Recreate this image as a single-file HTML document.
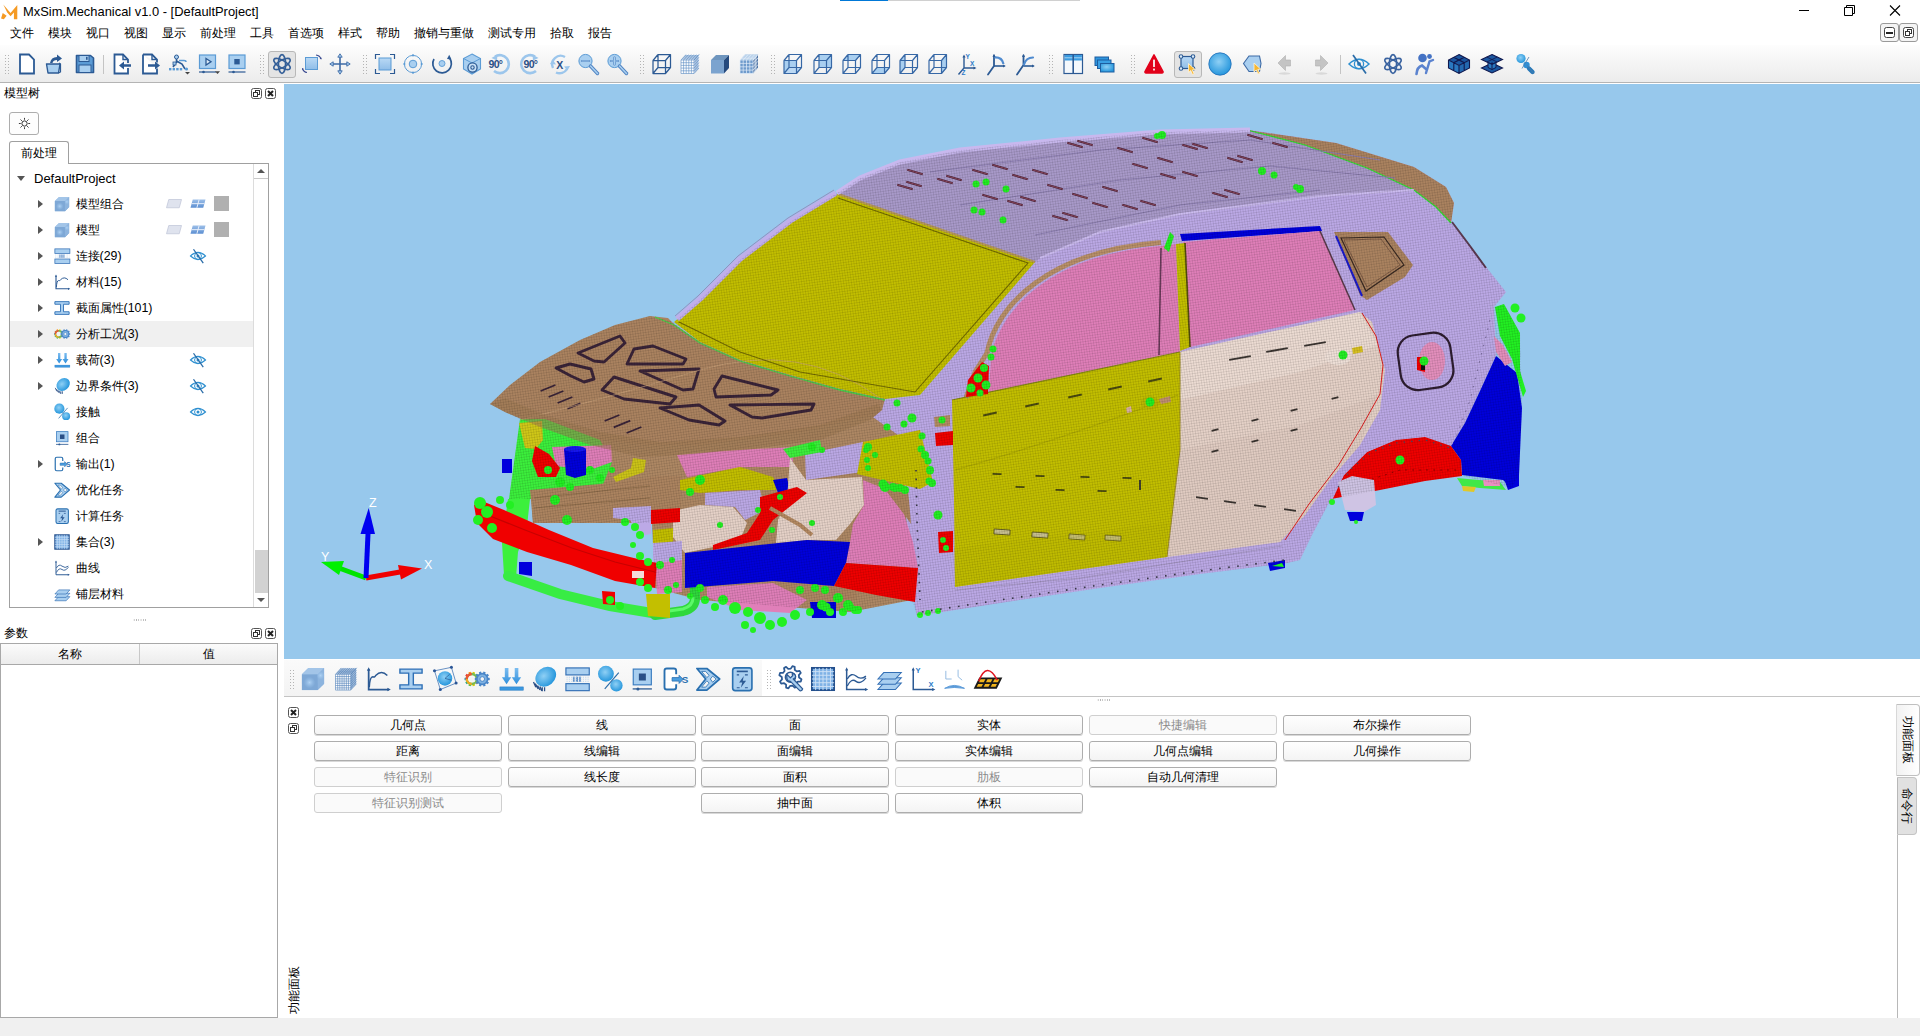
<!DOCTYPE html><html lang="zh"><head><meta charset="utf-8"><title>MxSim.Mechanical v1.0 - [DefaultProject]</title><style>
*{box-sizing:border-box;margin:0;padding:0}
html,body{width:1920px;height:1036px;overflow:hidden;background:#fff}
body{font-family:"Liberation Sans",sans-serif;font-size:12px;color:#000;position:relative}
.abs{position:absolute}
#title{left:23px;top:3px;height:18px;line-height:18px;font-size:12.9px;white-space:nowrap}
#menubar{left:0;top:23px;height:22px;width:1920px}
#menubar span{position:absolute;top:0;height:22px;line-height:21px;font-size:12px;white-space:nowrap}
#tb{left:0;top:45px;width:1920px;height:38px;background:linear-gradient(#fdfdfd,#f6f6f6 40%,#ececec);border-bottom:1px solid #b4b4b4}
.ic{position:absolute;width:24px;height:24px}
.ic svg{display:block;width:24px;height:24px;overflow:visible}
.hd{position:absolute;width:6px;height:21px;background-image:radial-gradient(circle,#b4b4b4 0.7px,transparent 1px);background-size:3px 3px}
.sep{position:absolute;width:1px;height:19px;background:#c4c4c4}
.sel{position:absolute;background:#e4e4e4;border:1px solid #b8b8b8;border-radius:3px}
.docktitle{position:absolute;font-size:12px;line-height:14px;white-space:nowrap}
.dbtn{position:absolute;width:11px;height:11px;border:1px solid #555;border-radius:2.5px;background:#fff}
.dbtn svg{position:absolute;left:0;top:0;width:9px;height:9px}
#treepane{left:9px;top:163px;width:260px;height:445px;border:1px solid #a0a0a0;background:#fff}
.row{position:absolute;left:0px;width:243px;height:26px}
.row .t{position:absolute;top:0;line-height:26px;font-size:12.4px;white-space:nowrap}
.arr{position:absolute;width:0;height:0}
.arr.r{border-left:5px solid #555;border-top:4px solid transparent;border-bottom:4px solid transparent}
.arr.d{border-top:5px solid #555;border-left:4px solid transparent;border-right:4px solid transparent}
.ti{position:absolute;width:18px;height:18px}
.ti svg{display:block;width:18px;height:18px;overflow:visible}
.btn{position:absolute;height:20px;width:188px;border:1px solid #adadad;border-radius:3px;background:linear-gradient(#fefefe,#f4f4f4);text-align:center;line-height:18px;font-size:12px;white-space:nowrap;box-shadow:0 1px 0 #d8d8d8}
.btn.dis{color:#8a8a8a;border-color:#cfcfcf;background:#fafafa;box-shadow:none}
.vtab{position:absolute;writing-mode:vertical-rl;font-size:12px;white-space:nowrap;text-align:center}
</style></head><body><svg width="0" height="0" style="position:absolute;left:0;top:0"><defs><linearGradient id="gL" x1="0" y1="0" x2="0" y2="1"><stop offset="0" stop-color="#b9d9f5"/><stop offset="1" stop-color="#8fbde8"/></linearGradient><radialGradient id="gS" cx=".45" cy=".4" r=".6"><stop offset="0" stop-color="#8fd0f5"/><stop offset="1" stop-color="#2596dc"/></radialGradient><linearGradient id="gC" x1="0" y1="0" x2="1" y2="1"><stop offset="0" stop-color="#9cc0e6"/><stop offset="1" stop-color="#6f9cd0"/></linearGradient><radialGradient id="gH"><stop offset="0" stop-color="#b4d6f6" stop-opacity=".9"/><stop offset="1" stop-color="#9cc6ee" stop-opacity="0"/></radialGradient><linearGradient id="gG" x1="0" y1="0" x2="0" y2="1"><stop offset="0" stop-color="#9dbfe8"/><stop offset="1" stop-color="#5c8fd2"/></linearGradient><linearGradient id="gA" x1="0" y1="0" x2="0" y2="1"><stop offset="0" stop-color="#7cbdf0"/><stop offset="1" stop-color="#2f8fdc"/></linearGradient></defs></svg><div class="abs" style="left:840px;top:0;width:48px;height:1px;background:#0078d7"></div><div class="abs" style="left:888px;top:0;width:192px;height:1px;background:#d0d0d0"></div><svg class="abs" style="left:1px;top:4px;width:18px;height:15.700px" viewBox="0 0 16 14"><path d="M0 13L1.5 8L5 10.5L2.5 13.5ZM2 0.5L8.5 8L14.5 1V13.5H11.5V7.5L8.5 11L5.500 7.500L4 4.500Z" fill="#f59a23"/></svg><div id="title" class="abs">MxSim.Mechanical v1.0 - [DefaultProject]</div><svg class="abs" style="left:1790px;top:0;width:130px;height:22px" viewBox="0 0 130 22"><path d="M9 10.500H19" stroke="#000" stroke-width="1"/><path d="M54.500 7.500H62.500V15.500H54.500ZM56.500 7.500V5.500H64.500V13.500H62.500" fill="none" stroke="#000" stroke-width="1"/><path d="M100 5.500L110 15.500M110 5.500L100 15.500" stroke="#000" stroke-width="1.100"/></svg><div id="menubar" class="abs"><span style="left:10px">文件</span><span style="left:48px">模块</span><span style="left:86px">视口</span><span style="left:124px">视图</span><span style="left:162px">显示</span><span style="left:200px">前处理</span><span style="left:250px">工具</span><span style="left:288px">首选项</span><span style="left:338px">样式</span><span style="left:376px">帮助</span><span style="left:414px">撤销与重做</span><span style="left:488px">测试专用</span><span style="left:550px">拾取</span><span style="left:588px">报告</span></div><div class="abs" style="left:1880px;top:23px;width:19px;height:19px;border:1px solid #9a9a9a;border-radius:3px;background:#f4f4f4"><div class="abs" style="left:3px;top:3px;width:11px;height:11px;border:1px solid #444;border-radius:2.500px;background:#fff"><div class="abs" style="left:1px;top:3.500px;width:7px;height:2px;background:#222"></div></div></div><div class="abs" style="left:1899px;top:23px;width:19px;height:19px;border:1px solid #9a9a9a;border-radius:3px;background:#f4f4f4"><div class="abs" style="left:3px;top:3px;width:11px;height:11px;border:1px solid #444;border-radius:2.500px;background:#fff"><svg class="abs" style="left:0;top:0;width:9px;height:9px" viewBox="0 0 9 9"><rect x="3.500" y="1.500" width="4" height="4" fill="none" stroke="#333"/><rect x="1.500" y="3.500" width="4" height="4" fill="#fff" stroke="#333"/></svg></div></div><div id="tb" class="abs"></div><div class="hd" style="left:4px;top:54px"></div><div class="ic" style="left:15.0px;top:52.0px;width:24px;height:24px"><svg style="width:24px;height:24px" viewBox="0 0 24 24"><path d="M5 2.5H14L19 7.5V21.5H5Z" fill="#fff" stroke="#2c5a94" stroke-width="1.8" stroke-linejoin="miter"/></svg></div><div class="ic" style="left:43.0px;top:52.0px;width:24px;height:24px"><svg style="width:24px;height:24px" viewBox="0 0 24 24"><path d="M3.5 12H17L15.5 21H5Z" fill="#a9cff0" stroke="#2c5a94" stroke-width="1.4" stroke-linejoin="round"/><path d="M7 11Q8 5 14 5V2.5L19 6.5L14 10V8Q10 8 9.5 11Z" fill="#2c5a94"/><path d="M16 11L17.5 12V20L15.5 21" fill="none" stroke="#2c5a94" stroke-width="1.2"/></svg></div><div class="ic" style="left:73.0px;top:52.0px;width:24px;height:24px"><svg style="width:24px;height:24px" viewBox="0 0 24 24"><path d="M3.5 3.5H17.5L20.5 6V20.5H3.5Z" fill="#5b9bd5" stroke="#2c5a94" stroke-width="1.6" stroke-linejoin="round"/><rect x="6" y="3.5" width="10" height="6" fill="#a9cff0" stroke="#2c5a94" stroke-width="1"/><rect x="13" y="4.8" width="1.6" height="3" fill="#2c5a94"/><rect x="6" y="13" width="12" height="7.5" fill="#a9cff0" stroke="#2c5a94" stroke-width="1"/></svg></div><div class="sep" style="left:103px;top:55px"></div><div class="ic" style="left:109.0px;top:52.0px;width:24px;height:24px"><svg style="width:24px;height:24px" viewBox="0 0 24 24"><path d="M12 2.5H5.5V21.5H19V16M19 11V7.5L14 2.5H12" fill="#fff" stroke="#2c5a94" stroke-width="1.8"/><path d="M14 2.5V7.5H19" fill="none" stroke="#2c5a94" stroke-width="1.4"/><path d="M22 12.2H15V9.5L10 13.5L15 17.5V14.8H22Z" fill="#2c5a94"/></svg></div><div class="ic" style="left:138.0px;top:52.0px;width:24px;height:24px"><svg style="width:24px;height:24px" viewBox="0 0 24 24"><path d="M5 2.5H14L19 7.5V10.5M19 16.5V21.5H5V2.5" fill="#fff" stroke="#2c5a94" stroke-width="1.8"/><path d="M14 2.5V7.5H19" fill="none" stroke="#2c5a94" stroke-width="1.4"/><path d="M10 12.2H17V9.5L22 13.5L17 17.5V14.8H10Z" fill="#2c5a94"/></svg></div><div class="ic" style="left:167.0px;top:52.0px;width:24px;height:24px"><svg style="width:24px;height:24px" viewBox="0 0 24 24"><circle cx="9.5" cy="5" r="2" fill="#a9cff0" stroke="#2c5a94" stroke-width="1"/><path d="M9.5 7V11M9.5 9L15 12L18 17M9 11L6 15" stroke="#2c5a94" stroke-width="1.6" fill="none"/><rect x="6" y="10" width="3" height="3" fill="#a9cff0" stroke="#2c5a94" stroke-width=".8"/><path d="M12 8.5H17Q19 8.5 19 10" stroke="#5b9bd5" stroke-width="1.5" fill="none"/><g fill="#5b9bd5"><rect x="2" y="16" width="2.4" height="2.4"/><rect x="5.6" y="16" width="2.4" height="2.4"/><rect x="9.2" y="16" width="2.4" height="2.4"/><rect x="12.8" y="16" width="2.4" height="2.4"/><circle cx="19.5" cy="17" r="1.6"/></g><path d="M18 20H23L20.5 22.6Z" fill="#444"/></svg></div><div class="ic" style="left:196.0px;top:52.0px;width:24px;height:24px"><svg style="width:24px;height:24px" viewBox="0 0 24 24"><rect x="3.5" y="3" width="16" height="13.5" fill="#a9cff0" stroke="#5b9bd5" stroke-width="1.2"/><path d="M10 6.5L15 9.7L10 13Z" fill="#dbeaf8" stroke="#2c5a94" stroke-width="1.3"/><path d="M3 20H20" stroke="#2c5a94" stroke-width="1.2"/><circle cx="7.5" cy="20" r="1.3" fill="#2c5a94"/><path d="M19 19.3H24L21.5 22Z" fill="#444"/></svg></div><div class="ic" style="left:225.0px;top:52.0px;width:24px;height:24px"><svg style="width:24px;height:24px" viewBox="0 0 24 24"><rect x="4" y="3" width="16" height="13.5" fill="#a9cff0" stroke="#5b9bd5" stroke-width="1.2"/><rect x="9.3" y="7" width="5.4" height="5.4" fill="#2c5a94"/><path d="M3.5 20H20.5" stroke="#2c5a94" stroke-width="1.2"/><circle cx="8.5" cy="20" r="1.3" fill="#2c5a94"/></svg></div><div class="hd" style="left:259px;top:54px"></div><div class="sel" style="left:268px;top:51px;width:28px;height:27px"></div><div class="ic" style="left:270.0px;top:52.0px;width:24px;height:24px"><svg style="width:24px;height:24px" viewBox="0 0 24 24"><g fill="none" stroke="#345f98" stroke-width="1.7"><ellipse cx="12" cy="12" rx="3.6" ry="9.3"/><ellipse cx="12" cy="12" rx="3.6" ry="9.3" transform="rotate(60 12 12)"/><ellipse cx="12" cy="12" rx="3.6" ry="9.3" transform="rotate(-60 12 12)"/></g></svg></div><div class="ic" style="left:300.0px;top:52.0px;width:24px;height:24px"><svg style="width:24px;height:24px" viewBox="0 0 24 24"><rect x="5.5" y="5.5" width="12" height="12" fill="url(#gL)" stroke="#5b9bd5" stroke-width="1"/><path d="M16 3Q20 3.5 21 7" fill="none" stroke="#3a4a90" stroke-width="1.1"/><path d="M21.5 7.5L19.6 6.6L21.4 5.4Z" fill="#3a4a90"/><path d="M7 20.5Q3.5 20 2.5 16.5" fill="none" stroke="#3a4a90" stroke-width="1.1"/><path d="M2 16L3.9 16.9L2.1 18.1Z" fill="#3a4a90"/></svg></div><div class="ic" style="left:328.0px;top:52.0px;width:24px;height:24px"><svg style="width:24px;height:24px" viewBox="0 0 24 24"><path d="M12 4V20M4 12H20" stroke="#3d6aa5" stroke-width="1.6"/><g fill="#a9cff0" stroke="#3d6aa5" stroke-width=".9"><path d="M12 1.8L14.2 5.2H9.8Z"/><path d="M12 22.2L14.2 18.8H9.8Z"/><path d="M1.8 12L5.2 9.8V14.2Z"/><path d="M22.2 12L18.8 9.8V14.2Z"/></g></svg></div><div class="hd" style="left:362px;top:54px"></div><div class="ic" style="left:373.0px;top:52.0px;width:24px;height:24px"><svg style="width:24px;height:24px" viewBox="0 0 24 24"><rect x="6" y="6" width="12" height="12" fill="url(#gL)" stroke="#5b9bd5" stroke-width="1"/><path d="M2.5 7V2.5H7M17 2.5H21.5V7M21.5 17V21.5H17M7 21.5H2.5V17" fill="none" stroke="#2c5a94" stroke-width="1.2"/></svg></div><div class="ic" style="left:401.0px;top:52.0px;width:24px;height:24px"><svg style="width:24px;height:24px" viewBox="0 0 24 24"><circle cx="12" cy="12" r="8.6" fill="none" stroke="#5b9bd5" stroke-width="1"/><circle cx="12" cy="12" r="3.8" fill="#a9cff0" stroke="#5b9bd5" stroke-width="1"/><path d="M12 2V4.5M12 19.5V22M2 12H4.5M19.5 12H22" stroke="#5b9bd5" stroke-width="1.2"/></svg></div><div class="ic" style="left:430.0px;top:52.0px;width:24px;height:24px"><svg style="width:24px;height:24px" viewBox="0 0 24 24"><path d="M4 7A9.3 9.3 0 1 0 19.5 6" fill="none" stroke="#2c5a94" stroke-width="1.7"/><path d="M21.5 7.5L17 7L19.2 2.8Z" fill="#2c5a94"/><circle cx="12" cy="11.5" r="3" fill="#a9cff0" stroke="#5b9bd5" stroke-width=".9"/></svg></div><div class="ic" style="left:460.0px;top:52.0px;width:24px;height:24px"><svg style="width:24px;height:24px" viewBox="0 0 24 24"><path d="M12 2L20.5 6.5V17L12 22L3.5 17V6.5Z" fill="#a9cff0" stroke="#5b9bd5" stroke-width="1.1"/><path d="M3.5 6.5L12 11L20.5 6.5M12 11V22" fill="none" stroke="#5b9bd5" stroke-width="1"/><circle cx="12.5" cy="15.5" r="4.6" fill="#c9e0f5" stroke="#2c5a94" stroke-width="1.3"/><circle cx="12.5" cy="15.5" r="1.7" fill="none" stroke="#2c5a94" stroke-width="1.1"/></svg></div><div class="ic" style="left:488.0px;top:52.0px;width:24px;height:24px"><svg style="width:24px;height:24px" viewBox="0 0 24 24"><path d="M7 4.5A9 9 0 1 1 6 19" fill="none" stroke="#9cc6ec" stroke-width="2.6"/><path d="M3.5 6L9.5 2.5L9 8.5Z" fill="#9cc6ec"/><text x="0.5" y="16.2" font-family="Liberation Sans,sans-serif" font-size="10.5" font-weight="bold" fill="#2a4f86" letter-spacing="-0.7">90°</text></svg></div><div class="ic" style="left:518.0px;top:52.0px;width:24px;height:24px"><svg style="width:24px;height:24px" viewBox="0 0 24 24"><path d="M17 4.5A9 9 0 1 0 18 19" fill="none" stroke="#9cc6ec" stroke-width="2.6"/><path d="M20.5 6L14.5 2.5L15 8.5Z" fill="#9cc6ec"/><text x="5.5" y="16.2" font-family="Liberation Sans,sans-serif" font-size="10.5" font-weight="bold" fill="#2a4f86" letter-spacing="-0.7">90°</text></svg></div><div class="ic" style="left:548.0px;top:52.0px;width:24px;height:24px"><svg style="width:24px;height:24px" viewBox="0 0 24 24"><path d="M5 16A8.5 8.5 0 0 1 17 5" fill="none" stroke="#9cc6ec" stroke-width="2.4"/><path d="M19 17A8.5 8.5 0 0 1 8 20.5" fill="none" stroke="#9cc6ec" stroke-width="2.4"/><path d="M2 12L5 8L8 12.5Z" fill="#9cc6ec"/><path d="M22 14L19.5 18.5L16 14.5Z" fill="#9cc6ec"/><text x="8.3" y="16.5" font-family="Liberation Sans,sans-serif" font-size="10.5" font-weight="bold" fill="#2a4f86">X</text></svg></div><div class="ic" style="left:576.0px;top:52.0px;width:24px;height:24px"><svg style="width:24px;height:24px" viewBox="0 0 24 24"><circle cx="9.5" cy="9" r="6.6" fill="#a9cff0" stroke="#5b9bd5" stroke-width="1"/><path d="M14.5 14L21.5 21.5" stroke="#4f83c2" stroke-width="3.4" stroke-linecap="round"/><path d="M14.5 14L21.5 21.5" stroke="#a9cff0" stroke-width="1.6" stroke-linecap="round"/><path d="M6 9H13" stroke="#4f83c2" stroke-width="2.2" stroke-linecap="round"/><path d="M6 9H13" stroke="#a9cff0" stroke-width="1" stroke-linecap="round"/></svg></div><div class="ic" style="left:605.0px;top:52.0px;width:24px;height:24px"><svg style="width:24px;height:24px" viewBox="0 0 24 24"><circle cx="9.5" cy="9" r="6.6" fill="#a9cff0" stroke="#5b9bd5" stroke-width="1"/><path d="M14.5 14L21.5 21.5" stroke="#4f83c2" stroke-width="3.4" stroke-linecap="round"/><path d="M14.5 14L21.5 21.5" stroke="#a9cff0" stroke-width="1.6" stroke-linecap="round"/><path d="M6 9H13M9.5 5.5V12.5" stroke="#4f83c2" stroke-width="2.2" stroke-linecap="round"/><path d="M6 9H13M9.5 5.5V12.5" stroke="#a9cff0" stroke-width="1" stroke-linecap="round"/></svg></div><div class="hd" style="left:639px;top:54px"></div><div class="ic" style="left:650.0px;top:52.0px;width:24px;height:24px"><svg style="width:24px;height:24px" viewBox="0 0 24 24"><path d="M3 8.5H15.5V21.5H3Z M8 2.5H20.5V15.5L15.5 21.5M3 8.5L8 2.5M15.5 8.5L20.5 2.5M8 2.5V15.5H20.5M8 15.5L3 21.5" fill="none" stroke="#2c5a94" stroke-width="1.25" stroke-linejoin="round"/></svg></div><div class="ic" style="left:678.0px;top:52.0px;width:24px;height:24px"><svg style="width:24px;height:24px" viewBox="0 0 24 24"><path d="M3 8H16V21.5H3Z" fill="#fff"/><path d="M3 8L8 2.5H21L16 8Z" fill="#fff"/><path d="M16 8L21 2.5V16L16 21.5Z" fill="#fff"/><path d="M3.0 8V21.5M3.0 8L8.0 2.5M3 8.0H16L21 2.5M5.6 8V21.5M5.6 8L10.6 2.5M3 10.7H16L21 5.2M8.2 8V21.5M8.2 8L13.2 2.5M3 13.4H16L21 7.9M10.8 8V21.5M10.8 8L15.8 2.5M3 16.1H16L21 10.6M13.4 8V21.5M13.4 8L18.4 2.5M3 18.8H16L21 13.3M16.0 8V21.5M16.0 8L21.0 2.5M3 21.5H16L21 16.0M4.0 6.9H17.0M5.0 5.8H18.0M6.0 4.7H19.0M7.0 3.6H20.0M17.0 6.9V20.4M18.0 5.8V19.3M19.0 4.7V18.2M20.0 3.6V17.1" fill="none" stroke="#5a8cc2" stroke-width="0.6"/></svg></div><div class="ic" style="left:708.0px;top:52.0px;width:24px;height:24px"><svg style="width:24px;height:24px" viewBox="0 0 24 24"><path d="M3 8H16V21.5H3Z" fill="#7ba3cf"/><path d="M3 8L8 3H21L16 8Z" fill="#6e95be"/><path d="M16 8L21 3V16L16 21.5Z" fill="#254a7e"/></svg></div><div class="ic" style="left:737.0px;top:52.0px;width:24px;height:24px"><svg style="width:24px;height:24px" viewBox="0 0 24 24"><path d="M3 8H16V21.5H3Z" fill="#6f9bcc"/><path d="M3 8L8 2.5H21L16 8Z" fill="#9fc0e2"/><path d="M16 8L21 2.5V16L16 21.5Z" fill="#2f5a92"/><path d="M3.0 8V21.5M3.0 8L8.0 2.5M3 8.0H16L21 2.5M6.2 8V21.5M6.2 8L11.2 2.5M3 11.4H16L21 5.9M9.5 8V21.5M9.5 8L14.5 2.5M3 14.8H16L21 9.2M12.8 8V21.5M12.8 8L17.8 2.5M3 18.1H16L21 12.6M16.0 8V21.5M16.0 8L21.0 2.5M3 21.5H16L21 16.0M4.2 6.6H17.2M5.5 5.2H18.5M6.8 3.9H19.8M17.2 6.6V20.1M18.5 5.2V18.8M19.8 3.9V17.4" fill="none" stroke="#e4eef9" stroke-width="0.7"/></svg></div><div class="hd" style="left:770px;top:54px"></div><div class="ic" style="left:781.0px;top:52.0px;width:24px;height:24px"><svg style="width:24px;height:24px" viewBox="0 0 24 24"><path d="M3 8.5H15.5V21.5H3Z" fill="#a9cff0"/><path d="M3 21.5L8 15.5H20.5L15.5 21.5Z" fill="#bcd9f4"/><path d="M3 8.5H15.5V21.5H3Z M8 2.5H20.5V15.5L15.5 21.5M3 8.5L8 2.5M15.5 8.5L20.5 2.5M8 2.5V15.5H20.5M8 15.5L3 21.5" fill="none" stroke="#3768a6" stroke-width="1.2" stroke-linejoin="round"/></svg></div><div class="ic" style="left:811.0px;top:52.0px;width:24px;height:24px"><svg style="width:24px;height:24px" viewBox="0 0 24 24"><path d="M8 2.5H20.5V15.5H8Z" fill="#a9cff0"/><path d="M3 8.5H15.5V21.5H3Z M8 2.5H20.5V15.5L15.5 21.5M3 8.5L8 2.5M15.5 8.5L20.5 2.5M8 2.5V15.5H20.5M8 15.5L3 21.5" fill="none" stroke="#3768a6" stroke-width="1.2" stroke-linejoin="round"/></svg></div><div class="ic" style="left:840.0px;top:52.0px;width:24px;height:24px"><svg style="width:24px;height:24px" viewBox="0 0 24 24"><path d="M3 8.5L8 2.5H20.5L15.5 8.5Z" fill="#a9cff0"/><path d="M3 8.5H15.5V21.5H3Z M8 2.5H20.5V15.5L15.5 21.5M3 8.5L8 2.5M15.5 8.5L20.5 2.5M8 2.5V15.5H20.5M8 15.5L3 21.5" fill="none" stroke="#3768a6" stroke-width="1.2" stroke-linejoin="round"/></svg></div><div class="ic" style="left:869.0px;top:52.0px;width:24px;height:24px"><svg style="width:24px;height:24px" viewBox="0 0 24 24"><path d="M3 21.5L8 15.5H20.5L15.5 21.5Z" fill="#a9cff0"/><path d="M3 8.5H15.5V21.5H3Z M8 2.5H20.5V15.5L15.5 21.5M3 8.5L8 2.5M15.5 8.5L20.5 2.5M8 2.5V15.5H20.5M8 15.5L3 21.5" fill="none" stroke="#3768a6" stroke-width="1.2" stroke-linejoin="round"/></svg></div><div class="ic" style="left:897.0px;top:52.0px;width:24px;height:24px"><svg style="width:24px;height:24px" viewBox="0 0 24 24"><path d="M3 8.5L8 2.5V15.5L3 21.5Z" fill="#a9cff0"/><path d="M3 8.5H15.5V21.5H3Z M8 2.5H20.5V15.5L15.5 21.5M3 8.5L8 2.5M15.5 8.5L20.5 2.5M8 2.5V15.5H20.5M8 15.5L3 21.5" fill="none" stroke="#3768a6" stroke-width="1.2" stroke-linejoin="round"/></svg></div><div class="ic" style="left:926.0px;top:52.0px;width:24px;height:24px"><svg style="width:24px;height:24px" viewBox="0 0 24 24"><path d="M15.5 8.5L20.5 2.5V15.5L15.5 21.5Z" fill="#a9cff0"/><path d="M3 8.5H15.5V21.5H3Z M8 2.5H20.5V15.5L15.5 21.5M3 8.5L8 2.5M15.5 8.5L20.5 2.5M8 2.5V15.5H20.5M8 15.5L3 21.5" fill="none" stroke="#3768a6" stroke-width="1.2" stroke-linejoin="round"/></svg></div><div class="ic" style="left:955.0px;top:52.0px;width:24px;height:24px"><svg style="width:24px;height:24px" viewBox="0 0 24 24"><path d="M9 4V16H20M9 16L3.5 22.5" fill="none" stroke="#2c5a94" stroke-width="1.4"/><path d="M9 2.5L10.6 5.5H7.4Z M21.5 16L18.5 17.6V14.4Z" fill="#2c5a94"/><g font-family="Liberation Sans,sans-serif" font-size="6.5" font-weight="bold" fill="#2d7bc8"><text x="10.5" y="6.5">Y</text><text x="15" y="13.5">X</text><text x="6.5" y="23">Z</text></g></svg></div><div class="ic" style="left:984.0px;top:52.0px;width:24px;height:24px"><svg style="width:24px;height:24px" viewBox="0 0 24 24"><path d="M10 3.5V14L4 22.5" fill="none" stroke="#2c5a94" stroke-width="1.8" stroke-linecap="round"/><path d="M10 14H20.5" stroke="#2c5a94" stroke-width="1.6"/><path d="M10.5 5.5Q18 5 19.5 12" fill="none" stroke="#4f8bd0" stroke-width="2.2"/><path d="M10 2L11.5 5H8.5Z M21.8 14L19 15.5V12.5Z" fill="#2c5a94"/></svg></div><div class="ic" style="left:1013.0px;top:52.0px;width:24px;height:24px"><svg style="width:24px;height:24px" viewBox="0 0 24 24"><path d="M10.5 3.5V13L4 22.5" fill="none" stroke="#2c5a94" stroke-width="1.8" stroke-linecap="round"/><path d="M10.5 14H20.5" stroke="#2c5a94" stroke-width="1.6"/><path d="M11 12.5Q13 5.5 20 5.5" fill="none" stroke="#4f8bd0" stroke-width="2.2" stroke-linecap="round"/><path d="M10.5 2L12 5H9Z M21.8 14L19 15.5V12.5Z" fill="#2c5a94"/></svg></div><div class="hd" style="left:1048px;top:54px"></div><div class="ic" style="left:1061.0px;top:52.0px;width:24px;height:24px"><svg style="width:24px;height:24px" viewBox="0 0 24 24"><rect x="3" y="2.5" width="18.5" height="19" fill="#f4f8fc" stroke="#2c5a94" stroke-width="1.2"/><rect x="3.6" y="3" width="17.3" height="5.5" fill="#3a9be0"/><path d="M3.6 5.8H21" stroke="#bfe0f8" stroke-width=".8"/><path d="M12.2 2.5V21.5" stroke="#2c5a94" stroke-width="1.6"/></svg></div><div class="ic" style="left:1093.0px;top:52.0px;width:24px;height:24px"><svg style="width:24px;height:24px" viewBox="0 0 24 24"><g stroke="#1d5d9f" stroke-width="1"><rect x="2" y="5" width="13.5" height="8.5" fill="#2f95dd"/><rect x="4.5" y="8" width="13.5" height="8.5" fill="#3aa0e4"/><rect x="7.5" y="11.5" width="13.5" height="8.5" fill="url(#gS)"/></g></svg></div><div class="hd" style="left:1130px;top:54px"></div><div class="ic" style="left:1142.0px;top:52.0px;width:24px;height:24px"><svg style="width:24px;height:24px" viewBox="0 0 24 24"><path d="M12 2.8L21 19.5Q21.3 21 20 21H4Q2.7 21 3 19.5Z" fill="#e2001a" stroke="#e2001a" stroke-width="1.5" stroke-linejoin="round"/><rect x="11" y="7.5" width="2" height="7.5" rx=".6" fill="#f6d9dc"/><rect x="11" y="16.6" width="2" height="2" rx=".5" fill="#f6d9dc"/></svg></div><div class="sel" style="left:1174px;top:51px;width:28px;height:27px"></div><div class="ic" style="left:1176.0px;top:52.0px;width:24px;height:24px"><svg style="width:24px;height:24px" viewBox="0 0 24 24"><rect x="5" y="4.5" width="12" height="12" fill="url(#gL)" stroke="#2c5a94" stroke-width="1.2"/><g fill="#dcebf8" stroke="#2c5a94" stroke-width="1.1"><circle cx="5" cy="4.5" r="1.8"/><circle cx="17" cy="4.5" r="1.8"/><circle cx="5" cy="16.5" r="1.8"/><circle cx="17" cy="16.5" r="1.8"/></g><path d="M12.5 11.5l0 9 2.2-2 1.8 4 1.6-.8-1.8-3.8 3-.2Z" fill="#f6b632" stroke="#fff4d8" stroke-width=".8"/></svg></div><div class="ic" style="left:1208.0px;top:52.0px;width:24px;height:24px"><svg style="width:24px;height:24px" viewBox="0 0 24 24"><circle cx="12" cy="12" r="11.2" fill="url(#gS)" stroke="#1f6db8" stroke-width=".8"/></svg></div><div class="ic" style="left:1241.0px;top:52.0px;width:24px;height:24px"><svg style="width:24px;height:24px" viewBox="0 0 24 24"><path d="M2.5 11.5L8 4H18.5L20 11.5L18.5 19.5H8Z" fill="#a9cff0" stroke="#3d6aa5" stroke-width="1.1"/><path d="M13 11l0 9 2.2-2 1.8 4 1.6-.8-1.8-3.8 3-.2Z" fill="#f6b632" stroke="#fff4d8" stroke-width=".8"/></svg></div><div class="ic" style="left:1275.0px;top:52.0px;width:24px;height:24px"><svg style="width:24px;height:24px" viewBox="0 0 24 24"><path d="M3 11L10.5 3.5V8H15.5V14H10.5V18.5Z" fill="#c4c4c4" stroke="#b0b0b0" stroke-width=".6"/><ellipse cx="9.5" cy="21.5" rx="6" ry="1.2" fill="#d9d9d9"/></svg></div><div class="ic" style="left:1307.0px;top:52.0px;width:24px;height:24px"><svg style="width:24px;height:24px" viewBox="0 0 24 24"><path d="M21 11L13.5 3.5V8H8.5V14H13.5V18.5Z" fill="#c4c4c4" stroke="#b0b0b0" stroke-width=".6"/><ellipse cx="14.5" cy="21.5" rx="6" ry="1.2" fill="#d9d9d9"/></svg></div><div class="sep" style="left:1340px;top:55px"></div><div class="ic" style="left:1347.0px;top:52.0px;width:24px;height:24px"><svg style="width:24px;height:24px" viewBox="0 0 24 24"><path d="M2 12Q12 2.5 22 12Q12 21.5 2 12Z" fill="none" stroke="#2d8fd0" stroke-width="1.5"/><circle cx="12" cy="12" r="4.6" fill="none" stroke="#2d8fd0" stroke-width="1.3"/><circle cx="12" cy="12" r="2" fill="#2d8fd0"/><path d="M6 3L19 21.5" stroke="#2a6ca8" stroke-width="1.7"/></svg></div><div class="ic" style="left:1381.0px;top:52.0px;width:24px;height:24px"><svg style="width:24px;height:24px" viewBox="0 0 24 24"><g fill="none" stroke="#3a63a0" stroke-width="1.7"><ellipse cx="12" cy="12" rx="3.6" ry="9.3"/><ellipse cx="12" cy="12" rx="3.6" ry="9.3" transform="rotate(60 12 12)"/><ellipse cx="12" cy="12" rx="3.6" ry="9.3" transform="rotate(-60 12 12)"/></g></svg></div><div class="ic" style="left:1413.0px;top:52.0px;width:24px;height:24px"><svg style="width:24px;height:24px" viewBox="0 0 24 24"><circle cx="9.5" cy="6" r="4.3" fill="#4472c4"/><circle cx="16.5" cy="4.5" r="2.4" fill="#4472c4"/><path d="M3.5 22Q4 15 9 13.5L13 17" fill="none" stroke="#5b83cf" stroke-width="2.6" stroke-linecap="round"/><path d="M13 21L16.5 9.5L20 8" fill="none" stroke="#5b83cf" stroke-width="2.4" stroke-linecap="round"/></svg></div><div class="ic" style="left:1447.0px;top:52.0px;width:24px;height:24px"><svg style="width:24px;height:24px" viewBox="0 0 24 24"><path d="M12 2.5L22.5 8L12 13.5L1.5 8Z" fill="#1b57a0"/><path d="M1.5 8L12 13.5V21.5L1.5 16Z" fill="#2a78c0"/><path d="M22.5 8L12 13.5V21.5L22.5 16Z" fill="#2368b0"/><path d="M12 2.5L22.5 8V16L12 21.5L1.5 16V8ZM1.5 8L12 13.5L22.5 8M12 13.5V21.5M6.7 5.2L17.2 10.7V18.7M17.3 5.2L6.8 10.7V18.7" fill="none" stroke="#10184e" stroke-width="1.1"/></svg></div><div class="ic" style="left:1480.0px;top:52.0px;width:24px;height:24px"><svg style="width:24px;height:24px" viewBox="0 0 24 24"><path d="M12 2.5L22.5 7.5L12 12.5L1.5 7.5Z" fill="#1b57a0" stroke="#10184e" stroke-width="1.1"/><path d="M12 11L22.5 16L12 21L1.5 16Z" fill="#1b57a0" stroke="#10184e" stroke-width="1.1"/><path d="M8 10.5V15.5L12 17.5V12.5ZM12 12.5L16 10.5V15.5L12 17.5" fill="#2a78c0" stroke="#10184e" stroke-width="1"/><path d="M6.7 5L17.2 10M17.3 5L6.8 10" stroke="#10184e" stroke-width=".8"/></svg></div><div class="ic" style="left:1513.0px;top:52.0px;width:24px;height:24px"><svg style="width:24px;height:24px" viewBox="0 0 24 24"><circle cx="8" cy="6.5" r="4.6" fill="url(#gS)"/><circle cx="13.5" cy="13" r="3.2" fill="#2f8fd6"/><path d="M16 16.5L19.5 20" stroke="#2a79b8" stroke-width="4.4" stroke-linecap="round"/><path d="M9 16.5L16 5M14 13L21 22" stroke="#4a7fb0" stroke-width=".8"/></svg></div><div class="docktitle" style="left:4px;top:86px">模型树</div><div class="dbtn" style="left:251px;top:88px"><svg viewBox="0 0 9 9"><rect x="3.5" y="1.5" width="4" height="4" fill="none" stroke="#333" stroke-width="1"/><rect x="1.5" y="3.5" width="4" height="4" fill="#fff" stroke="#333" stroke-width="1"/></svg></div><div class="dbtn" style="left:265px;top:88px"><svg viewBox="0 0 9 9"><path d="M2 2L7 7M7 2L2 7" stroke="#222" stroke-width="2" fill="none"/></svg></div><div class="abs" style="left:9px;top:112px;width:30px;height:23px;border:1px solid #adadad;border-radius:3px;background:#fdfdfd"><div class="abs" style="left:7px;top:3px;width:15px;height:15px"><svg style="width:15px;height:15px;display:block" viewBox="0 0 24 24"><circle cx="12" cy="12" r="4.200" fill="none" stroke="#222" stroke-width="1.500"/><path d="M12 3V6M12 18V21M3 12H6M18 12H21M5.600 5.600L7.800 7.800M16.200 16.200L18.400 18.400M18.400 5.600L16.200 7.800M7.800 16.200L5.600 18.400" stroke="#222" stroke-width="1.400"/></svg></div></div><div class="abs" style="left:9px;top:141px;width:60px;height:23px;border:1px solid #a0a0a0;border-bottom:none;border-radius:3px 3px 0 0;background:#fff;z-index:2;text-align:center;line-height:23px;font-size:12.4px">前处理</div><div id="treepane" class="abs"><div class="row" style="top:1px"><div class="arr d" style="left:7px;top:11px"></div><span class="t" style="left:24px;top:1px;font-size:13px">DefaultProject</span></div><div class="row" style="top:27px"><div class="arr r" style="left:28px;top:9px"></div><div class="ti" style="left:43px;top:4px"><svg viewBox="0 0 24 24"><path d="M2.5 8L8 2.5H21.5V16L16 21.5H2.5Z" fill="url(#gC)"/><path d="M2.5 8H16V21.5H2.5Z" fill="#7ea8d6"/><path d="M16 8L21.5 2.5V16L16 21.5Z" fill="#8db4de"/><path d="M2.5 8L8 2.5H21.5L16 8Z" fill="#a3c5e8"/><circle cx="9" cy="15" r="5" fill="url(#gH)"/><circle cx="18.5" cy="9" r="3.5" fill="url(#gH)"/></svg></div><span class="t" style="left:65.5px">模型组合</span><div class="ti" style="left:155px;top:4px"><svg viewBox="0 0 24 24"><path d="M5 6H22L19 17H2Z" fill="#dfe3ee" stroke="#c0c6d8" stroke-width="1"/></svg></div><div class="ti" style="left:179px;top:4px"><svg viewBox="0 0 24 24"><path d="M5 6H22L19 17H2Z" fill="url(#gG)"/><path d="M13.500 6L10.500 17M3.500 11.500H20.500" stroke="#e8f0fb" stroke-width="1.300"/></svg></div><div class="abs" style="left:204px;top:5px;width:15px;height:15px;background:#b0b0b0"></div></div><div class="row" style="top:53px"><div class="arr r" style="left:28px;top:9px"></div><div class="ti" style="left:43px;top:4px"><svg viewBox="0 0 24 24"><path d="M2.5 8L8 2.5H21.5V16L16 21.5H2.5Z" fill="url(#gC)"/><path d="M2.5 8H16V21.5H2.5Z" fill="#7ea8d6"/><path d="M16 8L21.5 2.5V16L16 21.5Z" fill="#8db4de"/><path d="M2.5 8L8 2.5H21.5L16 8Z" fill="#a3c5e8"/><circle cx="9" cy="15" r="5" fill="url(#gH)"/><circle cx="18.5" cy="9" r="3.5" fill="url(#gH)"/></svg></div><span class="t" style="left:65.5px">模型</span><div class="ti" style="left:155px;top:4px"><svg viewBox="0 0 24 24"><path d="M5 6H22L19 17H2Z" fill="#dfe3ee" stroke="#c0c6d8" stroke-width="1"/></svg></div><div class="ti" style="left:179px;top:4px"><svg viewBox="0 0 24 24"><path d="M5 6H22L19 17H2Z" fill="url(#gG)"/><path d="M13.500 6L10.500 17M3.500 11.500H20.500" stroke="#e8f0fb" stroke-width="1.300"/></svg></div><div class="abs" style="left:204px;top:5px;width:15px;height:15px;background:#b0b0b0"></div></div><div class="row" style="top:79px"><div class="arr r" style="left:28px;top:9px"></div><div class="ti" style="left:43px;top:4px"><svg viewBox="0 0 24 24"><rect x="2.5" y="2.5" width="20" height="6" fill="#a9cff0" stroke="#3470b5" stroke-width="1"/><rect x="2.5" y="16" width="20" height="6" fill="#a9cff0" stroke="#3470b5" stroke-width="1"/><g fill="#5b8cc6"><rect x="8.5" y="10" width="1.5" height="4.5"/><rect x="11" y="10" width="1.8" height="4.5"/><rect x="13.8" y="10" width="1.5" height="4.5"/></g><path d="M3 10.5H22M3 12.2H22M3 14H22" stroke="#b6cfe8" stroke-width=".7" stroke-dasharray="1 1"/></svg></div><span class="t" style="left:65.5px">连接(29)</span><div class="ti" style="left:179px;top:4px"><svg viewBox="0 0 24 24"><path d="M2 12Q12 2.5 22 12Q12 21.5 2 12Z" fill="none" stroke="#2d8fd0" stroke-width="1.5"/><circle cx="12" cy="12" r="4.6" fill="none" stroke="#2d8fd0" stroke-width="1.3"/><circle cx="12" cy="12" r="2" fill="#2d8fd0"/><path d="M6 3L19 21.5" stroke="#2a6ca8" stroke-width="1.7"/></svg></div></div><div class="row" style="top:105px"><div class="arr r" style="left:28px;top:9px"></div><div class="ti" style="left:43px;top:4px"><svg viewBox="0 0 24 24"><path d="M4 3.5V21H21.5" fill="none" stroke="#2c5a94" stroke-width="1.5"/><path d="M4 2L5.5 5H2.5Z M23 21L20 22.5V19.5Z" fill="#2c5a94"/><path d="M4.5 19Q5 10 7.5 10Q9 11 10 9Q15 4 20 9" fill="none" stroke="#2c5a94" stroke-width="1.3"/></svg></div><span class="t" style="left:65.5px">材料(15)</span></div><div class="row" style="top:131px"><div class="arr r" style="left:28px;top:9px"></div><div class="ti" style="left:43px;top:4px"><svg viewBox="0 0 24 24"><path d="M2.5 3.5H21.5V7H14V17H21.5V20.5H2.5V17H10V7H2.5Z" fill="#a9cff0" stroke="#2e6fb5" stroke-width="1.2"/></svg></div><span class="t" style="left:65.5px">截面属性(101)</span></div><div class="row" style="top:157px;background:#f0f0f0"><div class="arr r" style="left:28px;top:9px"></div><div class="ti" style="left:43px;top:4px"><svg viewBox="0 0 24 24"><path d="M11.1 12.0L13.7 12.0" stroke="#e33" stroke-width="2"/><path d="M10.4 14.1L12.5 15.6" stroke="#f80" stroke-width="2"/><path d="M8.6 15.4L9.4 17.9" stroke="#dc0" stroke-width="2"/><path d="M6.4 15.4L5.6 17.9" stroke="#4b4" stroke-width="2"/><path d="M4.6 14.1L2.5 15.6" stroke="#2a8" stroke-width="2"/><path d="M3.9 12.0L1.3 12.0" stroke="#28c" stroke-width="2"/><path d="M4.6 9.9L2.5 8.4" stroke="#e33" stroke-width="2"/><path d="M6.4 8.6L5.6 6.1" stroke="#f80" stroke-width="2"/><path d="M8.6 8.6L9.4 6.1" stroke="#dc0" stroke-width="2"/><path d="M10.4 9.9L12.5 8.4" stroke="#4b4" stroke-width="2"/><circle cx="7.5" cy="12" r="4.3" fill="none" stroke="#7b5" stroke-width="2"/><path d="M3.2 12A4.3 4.3 0 0 1 7.5 7.7" fill="none" stroke="#e53" stroke-width="2"/><path d="M7.5 16.3A4.3 4.3 0 0 1 3.2 12" fill="none" stroke="#ea2" stroke-width="2"/><path d="M20.3 12.0L22.9 12.0" stroke="#4a86c8" stroke-width="2"/><path d="M19.6 14.2L21.7 15.8" stroke="#4a86c8" stroke-width="2"/><path d="M17.7 15.6L18.5 18.1" stroke="#4a86c8" stroke-width="2"/><path d="M15.3 15.6L14.5 18.1" stroke="#4a86c8" stroke-width="2"/><path d="M13.4 14.2L11.3 15.8" stroke="#4a86c8" stroke-width="2"/><path d="M12.7 12.0L10.1 12.0" stroke="#4a86c8" stroke-width="2"/><path d="M13.4 9.8L11.3 8.2" stroke="#4a86c8" stroke-width="2"/><path d="M15.3 8.4L14.5 5.9" stroke="#4a86c8" stroke-width="2"/><path d="M17.7 8.4L18.5 5.9" stroke="#4a86c8" stroke-width="2"/><path d="M19.6 9.8L21.7 8.2" stroke="#4a86c8" stroke-width="2"/><circle cx="16.5" cy="12" r="4.6" fill="#7fb2e2" stroke="#4a86c8" stroke-width="1.4"/><circle cx="16.5" cy="12" r="2" fill="#f3f3f3" stroke="#4a86c8" stroke-width=".8"/><circle cx="7.5" cy="12" r="1.8" fill="#f3f3f3"/></svg></div><span class="t" style="left:65.5px">分析工况(3)</span></div><div class="row" style="top:183px"><div class="arr r" style="left:28px;top:9px"></div><div class="ti" style="left:43px;top:4px"><svg viewBox="0 0 24 24"><g fill="url(#gA)"><path d="M6.700 2.500H9.800V10.500H12.200L8.200 16.500L4.200 10.500H6.700Z"/><path d="M15.200 2.500H18.300V10.500H20.700L16.700 16.500L12.700 10.500H15.200Z"/></g><rect x="2.500" y="18.800" width="20" height="2.800" fill="#3a98e0" stroke="#2a7cc4" stroke-width=".5"/></svg></div><span class="t" style="left:65.5px">载荷(3)</span><div class="ti" style="left:179px;top:4px"><svg viewBox="0 0 24 24"><path d="M2 12Q12 2.5 22 12Q12 21.5 2 12Z" fill="none" stroke="#2d8fd0" stroke-width="1.5"/><circle cx="12" cy="12" r="4.6" fill="none" stroke="#2d8fd0" stroke-width="1.3"/><circle cx="12" cy="12" r="2" fill="#2d8fd0"/><path d="M6 3L19 21.5" stroke="#2a6ca8" stroke-width="1.7"/></svg></div></div><div class="row" style="top:209px"><div class="arr r" style="left:28px;top:9px"></div><div class="ti" style="left:43px;top:4px"><svg viewBox="0 0 24 24"><ellipse cx="13.500" cy="10" rx="9.600" ry="7.800" fill="url(#gS)" transform="rotate(-40 13.500 10)"/><path d="M3 14.5L5 19M4.5 16L7 20.5M6.5 17.5L8.5 21.5M8.5 18.5L10 22M10.5 19V22.5M12.5 19V22.5" stroke="#2a4f86" stroke-width="1.1"/></svg></div><span class="t" style="left:65.5px">边界条件(3)</span><div class="ti" style="left:179px;top:4px"><svg viewBox="0 0 24 24"><path d="M2 12Q12 2.5 22 12Q12 21.5 2 12Z" fill="none" stroke="#2d8fd0" stroke-width="1.5"/><circle cx="12" cy="12" r="4.6" fill="none" stroke="#2d8fd0" stroke-width="1.3"/><circle cx="12" cy="12" r="2" fill="#2d8fd0"/><path d="M6 3L19 21.5" stroke="#2a6ca8" stroke-width="1.7"/></svg></div></div><div class="row" style="top:235px"><div class="ti" style="left:43px;top:4px"><svg viewBox="0 0 24 24"><circle cx="8.5" cy="7.5" r="6.8" fill="url(#gS)"/><circle cx="17.5" cy="17.5" r="5.3" fill="url(#gS)"/><path d="M7.5 20.5L19.500 6.5" stroke="#2a6ca8" stroke-width="1"/></svg></div><span class="t" style="left:65.5px">接触</span><div class="ti" style="left:179px;top:4px"><svg viewBox="0 0 24 24"><path d="M2 12Q12 2.5 22 12Q12 21.5 2 12Z" fill="none" stroke="#2d8fd0" stroke-width="1.5"/><circle cx="12" cy="12" r="4.6" fill="none" stroke="#2d8fd0" stroke-width="1.3"/><circle cx="12" cy="12" r="2" fill="#2d8fd0"/></svg></div></div><div class="row" style="top:261px"><div class="ti" style="left:43px;top:4px"><svg viewBox="0 0 24 24"><rect x="4.5" y="3.5" width="15.5" height="13.5" fill="#a9cff0" stroke="#3a7cc0" stroke-width="1"/><rect x="9.3" y="7.3" width="6" height="6" fill="#2a4f86"/><path d="M4 20.5H20.500" stroke="#2c5a94" stroke-width="1.1"/><circle cx="8.5" cy="20.5" r="1.3" fill="#2c5a94"/></svg></div><span class="t" style="left:65.5px">组合</span></div><div class="row" style="top:287px"><div class="arr r" style="left:28px;top:9px"></div><div class="ti" style="left:43px;top:4px"><svg viewBox="0 0 24 24"><path d="M13 8V5Q13 3 11 3H5Q3 3 3 5V19Q3 21 5 21H11Q13 21 13 19V16.500" fill="#fff" stroke="#2a70b0" stroke-width="1.6"/><path d="M9.500 10.800H15.500V8.800L19 12.300L15.500 15.800V13.800H9.500Z" fill="#4a9ee0" stroke="#2a70b0" stroke-width=".7"/><text x="17.800" y="15.500" font-family="Liberation Sans,sans-serif" font-size="8.500" font-weight="bold" fill="#2a70b0">S</text></svg></div><span class="t" style="left:65.5px">输出(1)</span></div><div class="row" style="top:313px"><div class="ti" style="left:43px;top:4px"><svg viewBox="0 0 24 24"><path d="M2.500 3H11L22 12L11 21.500H2.500L10 12Z" fill="#a9cff0" stroke="#2a70b0" stroke-width="1.500" stroke-linejoin="round"/><path d="M6.500 5.500H10L13 9L11 10.800ZM6.500 19H10L13 15.500L11 13.500ZM14 12L16 9.500L19 12L16 14.800Z" fill="#f3f3f3" stroke="#2a70b0" stroke-width=".700"/></svg></div><span class="t" style="left:65.5px">优化任务</span></div><div class="row" style="top:339px"><div class="ti" style="left:43px;top:4px"><svg viewBox="0 0 24 24"><rect x="4" y="2.500" width="16.500" height="19.500" rx="2.200" fill="#a9cff0" stroke="#2a70b0" stroke-width="1.400"/><path d="M7.500 5.500H17" stroke="#2c5a94" stroke-width="1.400"/><path d="M7.500 8.500H9.500M14.500 8.500H17M7.500 19.500H10M14.500 19.500H17" stroke="#2c5a94" stroke-width="1"/><path d="M13.500 9.500L9.500 15H12.200L11 19.500L15.500 13.500H12.700Z" fill="#2c5a94"/></svg></div><span class="t" style="left:65.5px">计算任务</span></div><div class="row" style="top:365px"><div class="arr r" style="left:28px;top:9px"></div><div class="ti" style="left:43px;top:4px"><svg viewBox="0 0 24 24"><rect x="2.500" y="2.500" width="19" height="19" fill="#7fb2e6" stroke="#234f8c" stroke-width="1.600"/><path d="M5.7 2.500V21.500M2.500 5.7H21.500M8.8 2.500V21.500M2.500 8.8H21.500M12.0 2.500V21.500M2.500 12.0H21.500M15.2 2.500V21.500M2.500 15.2H21.500M18.4 2.500V21.500M2.500 18.4H21.500" stroke="#cfe2f6" stroke-width=".800"/></svg></div><span class="t" style="left:65.5px">集合(3)</span></div><div class="row" style="top:391px"><div class="ti" style="left:43px;top:4px"><svg viewBox="0 0 24 24"><path d="M4 3.500V21H21" fill="none" stroke="#2c5a94" stroke-width="1.300"/><path d="M4 2L5.300 4.800H2.700ZM22.500 21L19.700 22.300V19.700Z" fill="#2c5a94"/><path d="M4.500 12Q8 6 12 9.500T20.500 9.500M4.500 18Q8 11 12 14T20.500 11" fill="none" stroke="#2c5a94" stroke-width="1.200"/></svg></div><span class="t" style="left:65.5px">曲线</span></div><div class="row" style="top:417px"><div class="ti" style="left:43px;top:4px"><svg viewBox="0 0 24 24"><g fill="#a9cff0" stroke="#3470b5" stroke-width=".900"><path d="M2.500 21L7.500 15.500H22.500L17.500 21Z"/><path d="M2.500 16.500L7.500 11H22.500L17.500 16.500Z"/><path d="M2.500 12L7.500 6.500H22.500L17.500 12Z"/></g></svg></div><span class="t" style="left:65.5px">铺层材料</span></div><div class="abs" style="left:243px;top:0;width:15px;height:443px;background:#fff;border-left:1px solid #dcdcdc"></div><div class="abs" style="left:244px;top:14px;width:14px;height:1px;background:#c8c8c8"></div><div class="arr" style="left:247px;top:5px;border-bottom:4px solid #555;border-left:4px solid transparent;border-right:4px solid transparent"></div><div class="arr" style="left:247px;top:434px;border-top:4px solid #555;border-left:4px solid transparent;border-right:4px solid transparent"></div><div class="abs" style="left:245px;top:386px;width:13px;height:43px;background:#d2d2d2"></div></div><div class="abs" style="left:133px;top:619px;width:14px;height:2px;background-image:radial-gradient(circle,#b0b0b0 .6px,transparent .9px);background-size:2.300px 2px"></div><div class="docktitle" style="left:4px;top:626px">参数</div><div class="dbtn" style="left:251px;top:628px"><svg viewBox="0 0 9 9"><rect x="3.5" y="1.5" width="4" height="4" fill="none" stroke="#333" stroke-width="1"/><rect x="1.5" y="3.5" width="4" height="4" fill="#fff" stroke="#333" stroke-width="1"/></svg></div><div class="dbtn" style="left:265px;top:628px"><svg viewBox="0 0 9 9"><path d="M2 2L7 7M7 2L2 7" stroke="#222" stroke-width="2" fill="none"/></svg></div><div class="abs" style="left:0;top:643px;width:278px;height:375px;border:1px solid #a8a8a8;background:#fff"></div><div class="abs" style="left:0;top:643px;width:278px;height:22px;border:1px solid #a8a8a8;background:linear-gradient(#fbfbfb,#ececec)"><div class="abs" style="left:138px;top:0;width:1px;height:20px;background:#c8c8c8"></div><div class="abs" style="left:0;top:0;width:138px;text-align:center;line-height:20px;font-size:12.400px">名称</div><div class="abs" style="left:139px;top:0;width:138px;text-align:center;line-height:20px;font-size:12.400px">值</div></div><svg class="abs" style="left:284px;top:84px;width:1636px;height:575px" viewBox="284 84 1636 575"><rect x="284" y="84" width="1636" height="575" fill="#97c8ec"/><polygon points="837,193 860,178 900,162 960,150 1060,140 1160,132 1250,130 1336,143 1414,167 1446,187 1454,203 1451,223 1468,243 1483,263 1506,292 1494,307 1496,356 1480,391 1465,423 1451,446 1425,437 1396,440 1367,452 1344,475 1331,499 1312,535 1300,560 1287,563 1200,574 1100,588 1000,603 917,616 912,590 908,540 905,500 905,470 900,440 866,432 872,410 885,399 920,395 1035,262 837,193" fill="#bca9e6" /><polygon points="837,193 860,178 900,162 960,150 1060,140 1160,132 1250,130 1305,145 1367,168 1414,190 1320,196 1180,214 1100,232 1040,258 1035,262" fill="#a99aca" /><polygon points="1247,130 1336,143 1414,167 1446,187 1454,203 1451,223 1436,207 1414,190 1367,168 1305,145" fill="#ab8360" /><path d="M1247 130L1305 145L1367 168L1414 190L1436 207L1451 223" fill="none" stroke="#30e030" stroke-width="1.2"/><polygon points="837,194 1035,262 920,395 885,399 840,389 790,375 740,360 700,342 674,322 700,300 740,260 790,222" fill="#c3bf00" /><polygon points="490,404 510,385 540,362 580,340 615,325 650,316 668,318 674,324 700,342 740,360 790,375 840,389 885,399 882,410 870,420 820,440 740,450 680,455 640,457 590,445 540,427 505,412" fill="#ab8360" /><path d="M989 392L991 356C1000 310 1050 255 1160 246L1176 244L1180 352L1160 356Z" fill="#e07fb9" /><polygon points="1180,234 1320,226 1322,231 1182,241" fill="#0000dc" /><polygon points="1183,242 1320,231 1355,310 1190,347" fill="#e07fb9" /><polygon points="1334,232 1388,232 1413,265 1405,277 1367,300 1360,295" fill="#ab8360" /><polygon points="952,400 1180,352 1180,450 1167,557 955,587 954,500" fill="#c3bf00" /><polygon points="1180,352 1360,312 1372,322 1385,370 1380,410 1360,445 1330,480 1305,515 1280,542 1167,557 1180,450" fill="#e6d2c8" /><polygon points="1176,244 1185,243 1190,347 1180,351" fill="#c3bf00" /><path d="M1161 248L1159 355" fill="none" stroke="#6a3a5a" stroke-width="1.6"/><path d="M1185 243L1190 347" fill="none" stroke="#55500a" stroke-width="1.6"/><rect x="1399" y="334" width="53" height="55" rx="17" fill="#bca9e6" stroke="#2e1e30" stroke-width="2.2" transform="rotate(-8 1425 361)"/><ellipse cx="1432" cy="361" rx="13" ry="19" fill="#e48fbd"/><polygon points="1417,357 1425,357 1425,372 1417,370" fill="#f00000" /><rect x="1421" y="365" width="4" height="5" fill="#111"/><polygon points="1496,356 1517,373 1522,408 1520,452 1519,475 1512,488 1503,480 1462,475 1461,460 1451,446 1465,423 1480,391" fill="#0000dc" /><polygon points="1331,499 1344,475 1367,452 1396,440 1425,437 1451,446 1461,460 1462,476 1425,481 1375,491" fill="#f00000" /><path d="M1327 503L1341 473L1365 449L1395 436L1426 433L1453 442" fill="none" stroke="#bca9e6" stroke-width="7"/><polygon points="1495,307 1504,304 1520,333 1520,371 1526,391 1523,397 1512,359 1500,336" fill="#22f022" /><polygon points="1494,336 1503,345 1512,362 1505,366 1496,352" fill="#e48fbd" /><polygon points="528,440 600,440 650,445 700,445 800,432 870,415 905,440 905,500 912,600 850,612 700,600 655,588 652,523 533,523" fill="#ae8864" /><polygon points="520,419 545,419 600,440 612,462 600,492 560,496 531,499 509,499" fill="#3cf03c" /><polygon points="508,499 530,499 527,526 518,552 516,578 504,575 502,543" fill="#3cf03c" /><path d="M508 576L560 594L610 606L652 613" fill="none" stroke="#38ec44" stroke-width="10" stroke-linecap="round"/><path d="M655 615L683 611Q695 608 695 598L695 588" fill="none" stroke="#2fd83c" stroke-width="10" stroke-linecap="round"/><path d="M655 613L683 609Q693 606 693 598" fill="none" stroke="#5cf868" stroke-width="3" stroke-linecap="round"/><polygon points="530,490 600,484 660,476 682,476 680,522 613,522 533,523" fill="#ac8460" /><path d="M534 498L650 486M534 508L650 498" fill="none" stroke="#8a6a48" stroke-width=".8"/><polygon points="519,423 542,421 543,440 536,449 525,448" fill="#d0c818" /><polygon points="552,447 611,445 612,462 590,470 556,466" fill="#e07fb9" /><polygon points="535,446 549,454 560,468 556,477 538,477 532,461" fill="#f00000" /><polygon points="564,449 586,449 586,475 575,478 566,475" fill="#0000dc" /><ellipse cx="575" cy="449" rx="11" ry="3" fill="#1818f0"/><polygon points="502,459 512,459 512,473 502,473" fill="#0000dc" /><polygon points="613,477 631,468 633,458 646,460 644,472 616,482" fill="#ccc418" /><polygon points="677,455 720,451 793,447 793,467 740,467 687,477" fill="#e07fb9" /><polygon points="805,454 863,442 862,472 806,480" fill="#bca9e6" /><polygon points="783,449 820,440 822,452 790,458" fill="#3cf03c" /><polygon points="863,442 920,430 933,482 920,489 857,474" fill="#c3bf00" /><polygon points="680,480 740,467 773,477 780,490 740,490 700,493 680,490" fill="#c3bf00" /><polygon points="773,480 787,478 790,490 778,493" fill="#0000dc" /><polygon points="790,458 806,480 862,477 864,505 850,524 836,540 807,540 776,543 778,520 787,500" fill="#e6d2c8" /><polygon points="673,511 700,505 733,507 747,523 740,540 713,547 685,553 673,537" fill="#e6d2c8" /><polygon points="651,510 680,508 680,522 651,524" fill="#f00000" /><polygon points="653,530 673,528 673,543 653,545" fill="#c3bf00" /><polygon points="613,508 651,506 651,534 640,536 630,520 613,518" fill="#bca9e6" /><polygon points="653,543 682,541 682,561 653,563" fill="#bca9e6" /><polygon points="705,493 760,490 765,510 745,520 735,507 705,505" fill="#bca9e6" /><polygon points="863,480 885,489 904,514 913,542 918,568 846,563 850,542 853,524 864,505" fill="#e07fb9" /><polygon points="885,489 908,489 911,524 904,514" fill="#ac8460" /><polygon points="760,497 797,487 807,493 773,520 760,540 713,550 713,545 747,533 760,513" fill="#f00000" /><path d="M770 508L800 525L812 535" fill="none" stroke="#b58a62" stroke-width="4"/><polygon points="685,553 807,540 850,542 846,563 834,586 773,581 685,588" fill="#0000dc" /><polygon points="846,563 918,568 915,602 876,595 834,586" fill="#f00000" /><polygon points="830,586 857,591 857,600 832,598" fill="#ac8460" /><polygon points="707,587 773,583 807,600 790,613 740,610 707,597" fill="#e07fb9" /><polygon points="810,602 836,602 836,618 812,618" fill="#0000dc" /><polygon points="646,594 670,594 670,618 648,616" fill="#c3bf00" /><polygon points="655,563 682,560 682,592 657,594" fill="#e07fb9" /><polygon points="519,562 532,562 532,576 519,574" fill="#0000dc" /><polygon points="602,591 615,592 615,605 603,604" fill="#f00000" /><polygon points="474,505 482,501 504,510 549,530 593,548 638,559 657,563 655,588 615,581 571,565 527,552 493,539 477,523" fill="#f00000" /><path d="M480 512L525 530L572 548L615 562L655 572" fill="none" stroke="#c80000" stroke-width="1.2"/><rect x="632" y="571" width="12" height="7" fill="#f4dada"/><circle cx="480" cy="503" r="6" fill="#22f022"/><circle cx="487" cy="512" r="6" fill="#22f022"/><circle cx="478" cy="520" r="5" fill="#22f022"/><circle cx="492" cy="528" r="5" fill="#22f022"/><circle cx="500" cy="500" r="4" fill="#22f022"/><circle cx="510" cy="505" r="4" fill="#22f022"/><circle cx="555" cy="500" r="5" fill="#22f022"/><circle cx="567" cy="520" r="5" fill="#22f022"/><circle cx="548" cy="470" r="4" fill="#22f022"/><circle cx="560" cy="482" r="5" fill="#22f022"/><circle cx="570" cy="487" r="4" fill="#22f022"/><circle cx="600" cy="478" r="4" fill="#22f022"/><circle cx="590" cy="470" r="4" fill="#22f022"/><circle cx="612" cy="470" r="3" fill="#22f022"/><circle cx="625" cy="522" r="4" fill="#22f022"/><circle cx="635" cy="527" r="4" fill="#22f022"/><circle cx="640" cy="535" r="4" fill="#22f022"/><circle cx="633" cy="545" r="3" fill="#22f022"/><circle cx="640" cy="556" r="4" fill="#22f022"/><circle cx="648" cy="562" r="4" fill="#22f022"/><circle cx="660" cy="565" r="4" fill="#22f022"/><circle cx="672" cy="560" r="3" fill="#22f022"/><circle cx="640" cy="582" r="4" fill="#22f022"/><circle cx="648" cy="588" r="4" fill="#22f022"/><circle cx="668" cy="590" r="4" fill="#22f022"/><circle cx="676" cy="585" r="3" fill="#22f022"/><circle cx="700" cy="480" r="5" fill="#22f022"/><circle cx="690" cy="492" r="4" fill="#22f022"/><circle cx="812" cy="447" r="4" fill="#22f022"/><circle cx="822" cy="450" r="3" fill="#22f022"/><circle cx="868" cy="447" r="4" fill="#22f022"/><circle cx="875" cy="455" r="3" fill="#22f022"/><circle cx="925" cy="455" r="4" fill="#22f022"/><circle cx="930" cy="470" r="4" fill="#22f022"/><circle cx="932" cy="483" r="4" fill="#22f022"/><circle cx="885" cy="487" r="5" fill="#22f022"/><circle cx="895" cy="488" r="4" fill="#22f022"/><circle cx="905" cy="490" r="4" fill="#22f022"/><circle cx="758" cy="510" r="3" fill="#22f022"/><circle cx="772" cy="530" r="3" fill="#22f022"/><circle cx="812" cy="523" r="3" fill="#22f022"/><circle cx="720" cy="525" r="3" fill="#22f022"/><circle cx="780" cy="497" r="3" fill="#22f022"/><circle cx="723" cy="600" r="5" fill="#22f022"/><circle cx="735" cy="608" r="6" fill="#22f022"/><circle cx="748" cy="612" r="5" fill="#22f022"/><circle cx="760" cy="618" r="6" fill="#22f022"/><circle cx="770" cy="625" r="5" fill="#22f022"/><circle cx="782" cy="622" r="5" fill="#22f022"/><circle cx="795" cy="615" r="5" fill="#22f022"/><circle cx="810" cy="612" r="4" fill="#22f022"/><circle cx="822" cy="605" r="5" fill="#22f022"/><circle cx="838" cy="598" r="5" fill="#22f022"/><circle cx="848" cy="605" r="5" fill="#22f022"/><circle cx="855" cy="610" r="4" fill="#22f022"/><circle cx="800" cy="590" r="4" fill="#22f022"/><circle cx="815" cy="588" r="4" fill="#22f022"/><circle cx="825" cy="590" r="4" fill="#22f022"/><circle cx="610" cy="600" r="4" fill="#22f022"/><circle cx="620" cy="606" r="4" fill="#22f022"/><circle cx="700" cy="588" r="4" fill="#22f022"/><circle cx="690" cy="596" r="3" fill="#22f022"/><circle cx="705" cy="600" r="4" fill="#22f022"/><circle cx="715" cy="607" r="4" fill="#22f022"/><circle cx="745" cy="625" r="4" fill="#22f022"/><circle cx="753" cy="630" r="3" fill="#22f022"/><circle cx="830" cy="612" r="4" fill="#22f022"/><circle cx="843" cy="612" r="4" fill="#22f022"/><polygon points="578,353 620,336 625,343 604,362 594,361" fill="none" stroke="#3a2438" stroke-width="2.9" stroke-linejoin="round"/><polygon points="634,349 653,346 686,359 683,364 627,364" fill="none" stroke="#3a2438" stroke-width="2.9" stroke-linejoin="round"/><polygon points="556,368 570,364 591,369 594,379 584,382 571,376" fill="none" stroke="#3a2438" stroke-width="2.9" stroke-linejoin="round"/><polygon points="640,371 699,369 693,389 683,390" fill="none" stroke="#3a2438" stroke-width="2.9" stroke-linejoin="round"/><polygon points="614,377 676,397 670,404 624,399 602,390" fill="none" stroke="#3a2438" stroke-width="2.9" stroke-linejoin="round"/><polygon points="722,376 778,390 771,395 716,397 714,389" fill="none" stroke="#3a2438" stroke-width="2.9" stroke-linejoin="round"/><polygon points="660,408 699,405 725,421 719,425 689,420" fill="none" stroke="#3a2438" stroke-width="2.9" stroke-linejoin="round"/><polygon points="730,405 814,404 811,410 762,418 752,417" fill="none" stroke="#3a2438" stroke-width="2.9" stroke-linejoin="round"/><path d="M540.6 391.0L555.4 385.0M548.6 397.0L563.4 391.0M557.6 403.0L572.4 397.0M567.5 408.6L580.5 403.4M604.6 421.0L619.4 415.0M613.7 427.4L630.3 420.6M626.6 433.0L641.4 427.0" fill="none" stroke="#3a2438" stroke-width="1.8"/><path d="M520 420Q600 400 700 370T880 398" fill="none" stroke="#caa27a" stroke-width=".8" opacity=".8"/><polygon points="490,404 505,412 540,427 590,445 640,457 680,455 740,450 820,440 870,420 882,410 878,404 820,425 740,437 660,442 600,432 545,415 505,398" fill="#9c7852" opacity=".55"/><path d="M655 317L674 325L700 343L740 361L790 376L840 390L885 400" fill="none" stroke="#48d048" stroke-width="1.3"/><path d="M679 322L740 352L800 372L915 392L1028 263L838 198" fill="none" stroke="#5a5200" stroke-width="1.1" opacity=".75"/><path d="M838 194L1035 262" fill="none" stroke="#b89a58" stroke-width="2.2"/><path d="M836 193L790 221L740 259L700 299L677 319" fill="none" stroke="#c0aeea" stroke-width="5.5" stroke-linejoin="round"/><path d="M834 190L788 218L738 256L698 296L675 316" fill="none" stroke="#8f80b4" stroke-width=".8"/><path d="M837 193L860 178L900 162L960 150L1060 140L1160 132L1250 130" fill="none" stroke="#c8b8ee" stroke-width="5"/><path d="M930 172L1100 150L1250 140L1380 160M960 205L1120 180L1270 166L1395 178M1035 235L1180 205L1320 190" fill="none" stroke="#8c7eb0" stroke-width="1"/><path d="M897.3 184.8L912.7 189.2M906.3 181.8L921.7 186.2M937.3 178.8L952.7 183.2M946.3 175.8L961.7 180.2M972.3 169.8L987.7 174.2M992.3 164.8L1007.7 169.2M1012.3 174.8L1027.7 179.2M1032.3 169.8L1047.7 174.2M982.3 194.8L997.7 199.2M1007.3 200.8L1022.7 205.2M1020.3 196.8L1035.7 201.2M1047.3 184.8L1062.7 189.2M1072.3 193.8L1087.7 198.2M1092.3 202.8L1107.7 207.2M1052.3 215.8L1067.7 220.2M1062.3 212.8L1077.7 217.2M907.3 169.8L922.7 174.2M1067.3 142.8L1082.7 147.2M1077.3 140.8L1092.7 145.2M1102.3 186.8L1117.7 191.2M1117.3 147.8L1132.7 152.2M1142.3 137.8L1157.7 142.2M1182.3 144.8L1197.7 149.2M1192.3 143.8L1207.7 148.2M1132.3 163.8L1147.7 168.2M1157.3 157.8L1172.7 162.2M1160.3 173.8L1175.7 178.2M1182.3 171.8L1197.7 176.2M1227.3 157.8L1242.7 162.2M1237.3 155.8L1252.7 160.2M1212.3 192.8L1227.7 197.2M1224.3 189.8L1239.7 194.2M1247.3 134.8L1262.7 139.2M1272.3 142.8L1287.7 147.2M1122.3 204.8L1137.7 209.2M1140.3 200.8L1155.7 205.2" fill="none" stroke="#4a2438" stroke-width="2.1"/><path d="M897.3 184.8L912.7 189.2M906.3 181.8L921.7 186.2M937.3 178.8L952.7 183.2M946.3 175.8L961.7 180.2M972.3 169.8L987.7 174.2M992.3 164.8L1007.7 169.2M1012.3 174.8L1027.7 179.2M1032.3 169.8L1047.7 174.2M982.3 194.8L997.7 199.2M1007.3 200.8L1022.7 205.2M1020.3 196.8L1035.7 201.2M1047.3 184.8L1062.7 189.2M1072.3 193.8L1087.7 198.2M1092.3 202.8L1107.7 207.2M1052.3 215.8L1067.7 220.2M1062.3 212.8L1077.7 217.2M907.3 169.8L922.7 174.2M1067.3 142.8L1082.7 147.2M1077.3 140.8L1092.7 145.2M1102.3 186.8L1117.7 191.2M1117.3 147.8L1132.7 152.2M1142.3 137.8L1157.7 142.2M1182.3 144.8L1197.7 149.2M1192.3 143.8L1207.7 148.2M1132.3 163.8L1147.7 168.2M1157.3 157.8L1172.7 162.2M1160.3 173.8L1175.7 178.2M1182.3 171.8L1197.7 176.2M1227.3 157.8L1242.7 162.2M1237.3 155.8L1252.7 160.2M1212.3 192.8L1227.7 197.2M1224.3 189.8L1239.7 194.2M1247.3 134.8L1262.7 139.2M1272.3 142.8L1287.7 147.2M1122.3 204.8L1137.7 209.2M1140.3 200.8L1155.7 205.2" fill="none" stroke="#a0506a" stroke-width=".8"/><circle cx="976" cy="184" r="3.5" fill="#22f022"/><circle cx="986" cy="182" r="3.5" fill="#22f022"/><circle cx="1006" cy="189" r="3.5" fill="#22f022"/><circle cx="974" cy="210" r="3.5" fill="#22f022"/><circle cx="982" cy="212" r="3.5" fill="#22f022"/><circle cx="1003" cy="220" r="3.5" fill="#22f022"/><circle cx="1162" cy="135" r="4" fill="#22f022"/><circle cx="1157" cy="136" r="3" fill="#22f022"/><circle cx="1262" cy="171" r="4" fill="#22f022"/><circle cx="1274" cy="175" r="3.5" fill="#22f022"/><circle cx="1300" cy="189" r="4" fill="#22f022"/><circle cx="1296" cy="187" r="3" fill="#22f022"/><polygon points="1164,248 1170,232 1174,236 1169,252" fill="#22f022" /><path d="M1040 258L1100 232L1180 214L1320 196L1414 190" fill="none" stroke="#ccbcf0" stroke-width="2"/><path d="M966 398L975 372L987 353C996 306 1048 251 1161 242.500" fill="none" stroke="#b99069" stroke-width="5" stroke-linejoin="round"/><path d="M1320 231L1355 310" fill="none" stroke="#5a3a4a" stroke-width="1.5"/><path d="M1336 236L1362 296" fill="none" stroke="#1a1ad0" stroke-width="2"/><polygon points="1341,238 1384,237 1404,265 1366,291" fill="none" stroke="#3a2a22" stroke-width="1.2"/><polygon points="1344,240 1381,239 1400,265 1367,287" fill="none" stroke="#6a4a3a" stroke-width=".7"/><path d="M983.2 415.5L996.8 412.5M1025.2 406.5L1038.8 403.5M1068.2 397.5L1081.8 394.5M1108.2 389.5L1121.8 386.5M1148.2 381.5L1161.8 378.5M992.5 473.8L1001.5 474.2M1035.5 475.8L1044.5 476.2M1080.5 476.8L1089.5 477.2M1122.5 477.8L1131.5 478.2M1015.5 486.8L1024.5 487.2M1055.5 489.8L1064.5 490.2M1097.5 490.8L1106.5 491.2" fill="none" stroke="#4a4a10" stroke-width="1.8"/><rect x="994" y="529.5" width="16" height="5" fill="#c8c090" stroke="#55501a" stroke-width=".8" transform="rotate(4 1002 532)"/><rect x="1032" y="532.5" width="16" height="5" fill="#c8c090" stroke="#55501a" stroke-width=".8" transform="rotate(4 1040 535)"/><rect x="1069" y="534.5" width="16" height="5" fill="#c8c090" stroke="#55501a" stroke-width=".8" transform="rotate(4 1077 537)"/><rect x="1105" y="535.5" width="16" height="5" fill="#c8c090" stroke="#55501a" stroke-width=".8" transform="rotate(4 1113 538)"/><path d="M1140 480L1140 490" fill="none" stroke="#333" stroke-width="1.8"/><path d="M955 470Q1060 440 1178 395" fill="none" stroke="#a8a400" stroke-width="1.2" opacity=".7"/><polygon points="954,548 1168,523 1167,557 955,587" fill="#b4b000" opacity=".22"/><path d="M952 400L1180 352" fill="none" stroke="#8a8a10" stroke-width="1.2"/><ellipse cx="1150" cy="403" rx="9" ry="7" fill="#b8b400" opacity=".7"/><circle cx="1150" cy="402" r="4.5" fill="#22f022"/><polygon points="1126,408 1131,406 1132,412 1127,413" fill="#d8b0a0" /><polygon points="1159,399 1170,396 1171,402 1161,404" fill="#c09070" /><polygon points="1180,450 1300,425 1378,395 1360,445 1330,480 1305,515 1280,542 1167,557" fill="#dcc6bc" opacity=".5"/><polygon points="1180,352 1360,312 1378,345 1300,372 1180,400" fill="#f1e3db" opacity=".6"/><path d="M1229.2 359.9L1250.8 356.1M1266.2 351.9L1287.8 348.1M1304.2 345.9L1325.8 342.1M1211.6 430.9L1218.4 429.1M1251.6 420.9L1258.4 419.1M1290.6 410.9L1297.4 409.1M1331.6 398.9L1338.4 397.1M1211.6 451.9L1218.4 450.1M1251.6 441.9L1258.4 440.1M1290.6 430.9L1297.4 429.1M1196.1 497.2L1207.9 498.8M1224.1 501.2L1235.9 502.8M1254.1 505.2L1265.9 506.8M1284.1 509.2L1295.9 510.8" fill="none" stroke="#3a3430" stroke-width="1.8"/><ellipse cx="1338" cy="357" rx="13" ry="8" fill="#efe0d8"/><circle cx="1343" cy="355" r="4.5" fill="#22f022"/><polygon points="1352,348 1362,346 1363,352 1353,354" fill="#d8c020" /><path d="M1362 313L1376 336L1383 365L1380 394L1361 428L1338 466L1309 504L1285 540" fill="none" stroke="#e02020" stroke-width="1"/><path d="M1180 352L1180 450L1167 557" fill="none" stroke="#a09020" stroke-width="1"/><polygon points="968,380 982,362 989,366 988,394 966,397" fill="#f00000" /><polygon points="935,433 953,431 953,445 936,446" fill="#f00000" /><polygon points="938,532 953,531 953,552 939,553" fill="#f00000" /><polygon points="934,417 950,415 950,426 935,427" fill="#b48c64" /><circle cx="922" cy="436" r="3.5" fill="#22f022"/><circle cx="921" cy="449" r="3.5" fill="#22f022"/><circle cx="928" cy="461" r="3.5" fill="#22f022"/><circle cx="930" cy="471" r="3.5" fill="#22f022"/><circle cx="929" cy="481" r="3.5" fill="#22f022"/><circle cx="883" cy="484" r="4.5" fill="#22f022"/><circle cx="893" cy="487" r="4" fill="#22f022"/><circle cx="900" cy="488" r="4" fill="#22f022"/><circle cx="897" cy="403" r="3.5" fill="#22f022"/><circle cx="912" cy="418" r="4.5" fill="#22f022"/><circle cx="887" cy="427" r="3.5" fill="#22f022"/><circle cx="904" cy="424" r="3.5" fill="#22f022"/><circle cx="866" cy="450" r="3" fill="#22f022"/><circle cx="867" cy="460" r="3" fill="#22f022"/><circle cx="868" cy="468" r="3" fill="#22f022"/><circle cx="938" cy="515" r="4.5" fill="#22f022"/><circle cx="942" cy="420" r="3.5" fill="#22f022"/><circle cx="826" cy="607" r="4.6" fill="#22f022"/><circle cx="850" cy="607" r="4" fill="#22f022"/><circle cx="858" cy="610" r="4" fill="#22f022"/><circle cx="943" cy="540" r="3" fill="#22f022"/><circle cx="946" cy="548" r="3" fill="#22f022"/><circle cx="993" cy="349" r="3.5" fill="#22f022"/><circle cx="991" cy="357" r="3.5" fill="#22f022"/><circle cx="984" cy="368" r="4" fill="#22f022"/><circle cx="978" cy="378" r="4.5" fill="#22f022"/><circle cx="971" cy="388" r="4.5" fill="#22f022"/><circle cx="986" cy="385" r="4.5" fill="#22f022"/><circle cx="980" cy="393" r="3.5" fill="#22f022"/><path d="M955 590L1080 578L1180 562L1282 546" fill="none" stroke="#a898c8" stroke-width="1"/><circle cx="920" cy="615" r="3" fill="#22f022"/><circle cx="928" cy="613" r="3" fill="#22f022"/><circle cx="938" cy="611" r="3" fill="#22f022"/><polygon points="1268,563 1285,560 1285,568 1270,571" fill="#0000dc" /><polygon points="1272,566 1282,563 1284,567" fill="#22f022" /><circle cx="1424" cy="361" r="4.5" fill="#22f022"/><circle cx="1400" cy="460" r="4.5" fill="#22f022"/><circle cx="1515" cy="308" r="4.5" fill="#22f022"/><circle cx="1521" cy="318" r="4.5" fill="#22f022"/><path d="M1338 487L1352 468L1372 452L1396 443L1425 440L1450 448" fill="none" stroke="#4a4a60" stroke-width="1.2" stroke-dasharray="1.5 6"/><path d="M1345 488L1400 470L1460 470" fill="none" stroke="#900" stroke-width="1" stroke-dasharray="2 5"/><polygon points="1338,482 1352,476 1374,480 1376,505 1364,512 1345,510" fill="#cfc4e4" /><polygon points="1347,512 1364,512 1362,521 1350,521" fill="#0000dc" /><circle cx="1332" cy="502" r="3" fill="#22f022"/><circle cx="1356" cy="522" r="2" fill="#22f022"/><polygon points="1457,478 1500,482 1506,490 1480,488 1462,486" fill="#40e848" /><polygon points="1462,486 1476,487 1474,492 1463,491" fill="#e0c828" /><polygon points="1483,480 1500,480 1500,486 1484,486" fill="#e890c0" /><polygon points="1503,476 1519,470 1519,486 1508,490" fill="#0000dc" /><path d="M1452 222L1470 246L1486 268" fill="none" stroke="#5a3a50" stroke-width="2"/><path d="M1490 320L1470 400L1455 440" fill="none" stroke="#7a6aa0" stroke-width="1" stroke-dasharray="1.5 7"/><path d="M922 612L1000 600L1100 585L1200 571L1285 560" fill="none" stroke="#3a3a4a" stroke-width="1.6" stroke-dasharray="1.6 7.5"/><path d="M916 470L917 520L920 600" fill="none" stroke="#3a3a4a" stroke-width="1.6" stroke-dasharray="1.6 7"/><defs><pattern id="mesh" width="2.6" height="2.6" patternUnits="userSpaceOnUse" patternTransform="rotate(-8)"><path d="M0 .3H2.6M.3 0V2.6" stroke="#000" stroke-opacity=".16" stroke-width=".6" fill="none"/></pattern></defs><polygon points="837,193 860,178 900,162 960,150 1060,140 1160,132 1250,130 1336,143 1414,167 1446,187 1454,203 1451,223 1468,243 1483,263 1506,292 1494,307 1504,304 1520,333 1522,408 1519,475 1512,488 1462,476 1425,481 1375,491 1331,499 1312,535 1300,560 1287,563 1200,574 1100,588 1000,603 917,616 912,600 850,612 700,600 655,588 652,523 533,523 531,499 509,499 520,419 505,412 490,404 510,385 540,362 580,340 615,325 650,316 674,322 700,300 740,260 790,222" fill="url(#mesh)" /><path d="M366 578L339 568" stroke="#00e400" stroke-width="5"/><path d="M321 562L344 561L339 575Z" fill="#00f000"/><path d="M366 578L400 572" stroke="#f00000" stroke-width="5"/><path d="M422 568.500L398 565L401 579.500Z" fill="#f00000"/><path d="M366 578L368 534" stroke="#0000f0" stroke-width="5"/><path d="M368.700 508L360.500 534L375 534Z" fill="#0000f0"/><g font-family="Liberation Sans,sans-serif" font-size="12.500" fill="#fff"><text x="369" y="507">Z</text><text x="321" y="561">Y</text><text x="424" y="569">X</text></g></svg><div class="abs" style="left:284px;top:660px;width:478px;height:36px;background:linear-gradient(#fafafa,#f3f3f3)"></div><div class="abs" style="left:284px;top:696px;width:1636px;height:1px;background:#c4c4c4"></div><div class="hd" style="left:289px;top:669px"></div><div class="ic" style="left:299.0px;top:665.0px;width:28px;height:28px"><svg style="width:28px;height:28px" viewBox="0 0 24 24"><path d="M2.5 8L8 2.5H21.5V16L16 21.5H2.5Z" fill="url(#gC)"/><path d="M2.5 8H16V21.5H2.5Z" fill="#7ea8d6"/><path d="M16 8L21.5 2.5V16L16 21.5Z" fill="#8db4de"/><path d="M2.5 8L8 2.5H21.5L16 8Z" fill="#a3c5e8"/><circle cx="9" cy="15" r="5" fill="url(#gH)"/><circle cx="18.5" cy="9" r="3.5" fill="url(#gH)"/></svg></div><div class="ic" style="left:332.0px;top:665.0px;width:28px;height:28px"><svg style="width:28px;height:28px" viewBox="0 0 24 24"><path d="M3 8H16V21.5H3Z" fill="#fff"/><path d="M3 8L8 2.5H21L16 8Z" fill="#fff"/><path d="M16 8L21 2.5V16L16 21.5Z" fill="#fff"/><path d="M3.0 8V21.5M3.0 8L8.0 2.5M3 8.0H16L21 2.5M4.9 8V21.5M4.9 8L9.9 2.5M3 9.9H16L21 4.4M6.7 8V21.5M6.7 8L11.7 2.5M3 11.9H16L21 6.4M8.6 8V21.5M8.6 8L13.6 2.5M3 13.8H16L21 8.3M10.4 8V21.5M10.4 8L15.4 2.5M3 15.7H16L21 10.2M12.3 8V21.5M12.3 8L17.3 2.5M3 17.6H16L21 12.1M14.1 8V21.5M14.1 8L19.1 2.5M3 19.6H16L21 14.1M16.0 8V21.5M16.0 8L21.0 2.5M3 21.5H16L21 16.0M3.7 7.2H16.7M4.4 6.4H17.4M5.1 5.6H18.1M5.9 4.9H18.9M6.6 4.1H19.6M7.3 3.3H20.3M16.7 7.2V20.7M17.4 6.4V19.9M18.1 5.6V19.1M18.9 4.9V18.4M19.6 4.1V17.6M20.3 3.3V16.8" fill="none" stroke="#4f80b8" stroke-width="0.5"/></svg></div><div class="ic" style="left:364.0px;top:665.0px;width:28px;height:28px"><svg style="width:28px;height:28px" viewBox="0 0 24 24"><path d="M4 3.5V21H21.5" fill="none" stroke="#2c5a94" stroke-width="1.5"/><path d="M4 2L5.5 5H2.5Z M23 21L20 22.5V19.5Z" fill="#2c5a94"/><path d="M4.5 19Q5 10 7.5 10Q9 11 10 9Q15 4 20 9" fill="none" stroke="#2c5a94" stroke-width="1.3"/></svg></div><div class="ic" style="left:397.0px;top:665.0px;width:28px;height:28px"><svg style="width:28px;height:28px" viewBox="0 0 24 24"><path d="M2.5 3.5H21.5V7H14V17H21.5V20.5H2.5V17H10V7H2.5Z" fill="#a9cff0" stroke="#2e6fb5" stroke-width="1.2"/></svg></div><div class="ic" style="left:431.0px;top:665.0px;width:28px;height:28px"><svg style="width:28px;height:28px" viewBox="0 0 24 24"><path d="M3 5L17.5 2L21.5 15.5L8 21Z" fill="none" stroke="#4a7ab8" stroke-width=".7"/><circle cx="12" cy="11.5" r="6.2" fill="url(#gS)"/><path d="M12 11.5L16 8M12 11.5L17.5 13" stroke="#2a5a94" stroke-width=".6"/><g fill="#2a5596"><circle cx="3" cy="5" r="1.3"/><circle cx="17.5" cy="2" r="1.3"/><circle cx="21.5" cy="15.5" r="1.3"/><circle cx="8" cy="21" r="1.3"/></g></svg></div><div class="ic" style="left:463.0px;top:665.0px;width:28px;height:28px"><svg style="width:28px;height:28px" viewBox="0 0 24 24"><path d="M11.1 12.0L13.7 12.0" stroke="#e33" stroke-width="2"/><path d="M10.4 14.1L12.5 15.6" stroke="#f80" stroke-width="2"/><path d="M8.6 15.4L9.4 17.9" stroke="#dc0" stroke-width="2"/><path d="M6.4 15.4L5.6 17.9" stroke="#4b4" stroke-width="2"/><path d="M4.6 14.1L2.5 15.6" stroke="#2a8" stroke-width="2"/><path d="M3.9 12.0L1.3 12.0" stroke="#28c" stroke-width="2"/><path d="M4.6 9.9L2.5 8.4" stroke="#e33" stroke-width="2"/><path d="M6.4 8.6L5.6 6.1" stroke="#f80" stroke-width="2"/><path d="M8.6 8.6L9.4 6.1" stroke="#dc0" stroke-width="2"/><path d="M10.4 9.9L12.5 8.4" stroke="#4b4" stroke-width="2"/><circle cx="7.5" cy="12" r="4.3" fill="none" stroke="#7b5" stroke-width="2"/><path d="M3.2 12A4.3 4.3 0 0 1 7.5 7.7" fill="none" stroke="#e53" stroke-width="2"/><path d="M7.5 16.3A4.3 4.3 0 0 1 3.2 12" fill="none" stroke="#ea2" stroke-width="2"/><path d="M20.3 12.0L22.9 12.0" stroke="#4a86c8" stroke-width="2"/><path d="M19.6 14.2L21.7 15.8" stroke="#4a86c8" stroke-width="2"/><path d="M17.7 15.6L18.5 18.1" stroke="#4a86c8" stroke-width="2"/><path d="M15.3 15.6L14.5 18.1" stroke="#4a86c8" stroke-width="2"/><path d="M13.4 14.2L11.3 15.8" stroke="#4a86c8" stroke-width="2"/><path d="M12.7 12.0L10.1 12.0" stroke="#4a86c8" stroke-width="2"/><path d="M13.4 9.8L11.3 8.2" stroke="#4a86c8" stroke-width="2"/><path d="M15.3 8.4L14.5 5.9" stroke="#4a86c8" stroke-width="2"/><path d="M17.7 8.4L18.5 5.9" stroke="#4a86c8" stroke-width="2"/><path d="M19.6 9.8L21.7 8.2" stroke="#4a86c8" stroke-width="2"/><circle cx="16.5" cy="12" r="4.6" fill="#7fb2e2" stroke="#4a86c8" stroke-width="1.4"/><circle cx="16.5" cy="12" r="2" fill="#f3f3f3" stroke="#4a86c8" stroke-width=".8"/><circle cx="7.5" cy="12" r="1.8" fill="#f3f3f3"/></svg></div><div class="ic" style="left:497.0px;top:665.0px;width:28px;height:28px"><svg style="width:28px;height:28px" viewBox="0 0 24 24"><g fill="url(#gA)"><path d="M6.700 2.500H9.800V10.500H12.200L8.200 16.500L4.200 10.500H6.700Z"/><path d="M15.200 2.500H18.300V10.500H20.700L16.700 16.500L12.700 10.500H15.200Z"/></g><rect x="2.500" y="18.800" width="20" height="2.800" fill="#3a98e0" stroke="#2a7cc4" stroke-width=".5"/></svg></div><div class="ic" style="left:530.0px;top:665.0px;width:28px;height:28px"><svg style="width:28px;height:28px" viewBox="0 0 24 24"><ellipse cx="13.500" cy="10" rx="9.600" ry="7.800" fill="url(#gS)" transform="rotate(-40 13.500 10)"/><path d="M3 14.5L5 19M4.5 16L7 20.5M6.5 17.5L8.5 21.5M8.5 18.5L10 22M10.5 19V22.5M12.5 19V22.5" stroke="#2a4f86" stroke-width="1.1"/></svg></div><div class="ic" style="left:563.0px;top:665.0px;width:28px;height:28px"><svg style="width:28px;height:28px" viewBox="0 0 24 24"><rect x="2.5" y="2.5" width="20" height="6" fill="#a9cff0" stroke="#3470b5" stroke-width="1"/><rect x="2.5" y="16" width="20" height="6" fill="#a9cff0" stroke="#3470b5" stroke-width="1"/><g fill="#5b8cc6"><rect x="8.5" y="10" width="1.5" height="4.5"/><rect x="11" y="10" width="1.8" height="4.5"/><rect x="13.8" y="10" width="1.5" height="4.5"/></g><path d="M3 10.5H22M3 12.2H22M3 14H22" stroke="#b6cfe8" stroke-width=".7" stroke-dasharray="1 1"/></svg></div><div class="ic" style="left:596.0px;top:665.0px;width:28px;height:28px"><svg style="width:28px;height:28px" viewBox="0 0 24 24"><circle cx="8.5" cy="7.5" r="6.8" fill="url(#gS)"/><circle cx="17.5" cy="17.5" r="5.3" fill="url(#gS)"/><path d="M7.5 20.5L19.500 6.5" stroke="#2a6ca8" stroke-width="1"/></svg></div><div class="ic" style="left:628.0px;top:665.0px;width:28px;height:28px"><svg style="width:28px;height:28px" viewBox="0 0 24 24"><rect x="4.5" y="3.5" width="15.5" height="13.5" fill="#a9cff0" stroke="#3a7cc0" stroke-width="1"/><rect x="9.3" y="7.3" width="6" height="6" fill="#2a4f86"/><path d="M4 20.5H20.500" stroke="#2c5a94" stroke-width="1.1"/><circle cx="8.5" cy="20.5" r="1.3" fill="#2c5a94"/></svg></div><div class="ic" style="left:661.0px;top:665.0px;width:28px;height:28px"><svg style="width:28px;height:28px" viewBox="0 0 24 24"><path d="M13 8V5Q13 3 11 3H5Q3 3 3 5V19Q3 21 5 21H11Q13 21 13 19V16.500" fill="#fff" stroke="#2a70b0" stroke-width="1.6"/><path d="M9.500 10.800H15.500V8.800L19 12.300L15.500 15.800V13.800H9.500Z" fill="#4a9ee0" stroke="#2a70b0" stroke-width=".7"/><text x="17.800" y="15.500" font-family="Liberation Sans,sans-serif" font-size="8.500" font-weight="bold" fill="#2a70b0">S</text></svg></div><div class="ic" style="left:694.0px;top:665.0px;width:28px;height:28px"><svg style="width:28px;height:28px" viewBox="0 0 24 24"><path d="M2.500 3H11L22 12L11 21.500H2.500L10 12Z" fill="#a9cff0" stroke="#2a70b0" stroke-width="1.500" stroke-linejoin="round"/><path d="M6.500 5.500H10L13 9L11 10.800ZM6.500 19H10L13 15.500L11 13.500ZM14 12L16 9.500L19 12L16 14.800Z" fill="#f3f3f3" stroke="#2a70b0" stroke-width=".700"/></svg></div><div class="ic" style="left:728.0px;top:665.0px;width:28px;height:28px"><svg style="width:28px;height:28px" viewBox="0 0 24 24"><rect x="4" y="2.500" width="16.500" height="19.500" rx="2.200" fill="#a9cff0" stroke="#2a70b0" stroke-width="1.400"/><path d="M7.500 5.500H17" stroke="#2c5a94" stroke-width="1.400"/><path d="M7.500 8.500H9.500M14.500 8.500H17M7.500 19.500H10M14.500 19.500H17" stroke="#2c5a94" stroke-width="1"/><path d="M13.500 9.500L9.500 15H12.200L11 19.500L15.500 13.500H12.700Z" fill="#2c5a94"/></svg></div><div class="hd" style="left:766px;top:669px"></div><div class="ic" style="left:777.0px;top:665.0px;width:28px;height:28px"><svg style="width:28px;height:28px" viewBox="0 0 24 24"><path d="M18.9 10.8L21.0 12.2L20.4 14.2L17.9 14.2L16.5 15.9L17.0 18.4L15.2 19.4L13.4 17.7L11.2 17.9L9.8 20.0L7.8 19.4L7.8 16.9L6.1 15.5L3.6 16.0L2.6 14.2L4.3 12.4L4.1 10.2L2.0 8.8L2.6 6.8L5.1 6.8L6.5 5.1L6.0 2.6L7.8 1.6L9.6 3.3L11.8 3.1L13.2 1.0L15.2 1.6L15.2 4.1L16.9 5.5L19.4 5.0L20.4 6.8L18.7 8.6Z" fill="#fff" stroke="#2c5a94" stroke-width="1.500" stroke-linejoin="round"/><circle cx="11.500" cy="10.500" r="4.300" fill="#f3f3f3" stroke="#2c5a94" stroke-width="1.300"/><path d="M8.500 8L11.500 11L13.500 9L13 7.500Q15.500 7 16 10Q15.500 11.800 14 12L22 20.500Q21.500 22.500 19.500 22L11.500 14Q9 14 8.500 12Q8.300 10 8.500 8Z" fill="#a9cff0" stroke="#2c5a94" stroke-width="1.100" stroke-linejoin="round"/></svg></div><div class="ic" style="left:809.0px;top:665.0px;width:28px;height:28px"><svg style="width:28px;height:28px" viewBox="0 0 24 24"><rect x="2.500" y="2.500" width="19" height="19" fill="#7fb2e6" stroke="#234f8c" stroke-width="1.600"/><path d="M5.7 2.500V21.500M2.500 5.7H21.500M8.8 2.500V21.500M2.500 8.8H21.500M12.0 2.500V21.500M2.500 12.0H21.500M15.2 2.500V21.500M2.500 15.2H21.500M18.4 2.500V21.500M2.500 18.4H21.500" stroke="#cfe2f6" stroke-width=".800"/></svg></div><div class="ic" style="left:842.0px;top:665.0px;width:28px;height:28px"><svg style="width:28px;height:28px" viewBox="0 0 24 24"><path d="M4 3.500V21H21" fill="none" stroke="#2c5a94" stroke-width="1.300"/><path d="M4 2L5.300 4.800H2.700ZM22.500 21L19.700 22.300V19.700Z" fill="#2c5a94"/><path d="M4.500 12Q8 6 12 9.500T20.500 9.500M4.500 18Q8 11 12 14T20.500 11" fill="none" stroke="#2c5a94" stroke-width="1.200"/></svg></div><div class="ic" style="left:875.0px;top:665.0px;width:28px;height:28px"><svg style="width:28px;height:28px" viewBox="0 0 24 24"><g fill="#a9cff0" stroke="#3470b5" stroke-width=".900"><path d="M2.500 21L7.500 15.500H22.500L17.500 21Z"/><path d="M2.500 16.500L7.500 11H22.500L17.500 16.500Z"/><path d="M2.500 12L7.500 6.500H22.500L17.500 12Z"/></g></svg></div><div class="ic" style="left:908.0px;top:665.0px;width:28px;height:28px"><svg style="width:28px;height:28px" viewBox="0 0 24 24"><path d="M4.500 3.500V21H22" fill="none" stroke="#2c5a94" stroke-width="1.300"/><path d="M4.500 2L5.800 4.800H3.200ZM23.500 21L20.700 22.300V19.700Z" fill="#2c5a94"/><g font-family="Liberation Sans,sans-serif" font-size="6.500" font-weight="bold" fill="#2d7bc8"><text x="6.500" y="6.500">Y</text><text x="17.500" y="19">X</text></g></svg></div><div class="ic" style="left:940.0px;top:665.0px;width:28px;height:28px"><svg style="width:28px;height:28px" viewBox="0 0 24 24"><g stroke="#8fb8e0" fill="none" stroke-width=".800"><path d="M5 5V12H10M15.500 4V10L19 13"/></g><path d="M4 20Q12 15 21 20Q12 18.500 4 20Z" fill="#5a9ad8" stroke="#5a9ad8" stroke-width=".800"/></svg></div><div class="ic" style="left:974.0px;top:665.0px;width:28px;height:28px"><svg style="width:28px;height:28px" viewBox="0 0 24 24"><path d="M5 11.500H23L19 19.500H1Z" fill="#f2b51c" stroke="#1a1a1a" stroke-width="1.600"/><path d="M11 11.500L7 19.500M17 11.500L13 19.500M3 15.500H21" stroke="#1a1a1a" stroke-width="1.600"/><path d="M4 14Q11 -4 20 13" fill="none" stroke="#e0141e" stroke-width="1.300"/></svg></div><div class="abs" style="left:1097px;top:699px;width:14px;height:2px;background-image:radial-gradient(circle,#b0b0b0 .6px,transparent .9px);background-size:2.300px 2px"></div><div class="dbtn" style="left:288px;top:707px"><svg viewBox="0 0 9 9"><path d="M2 2L7 7M7 2L2 7" stroke="#222" stroke-width="2" fill="none"/></svg></div><div class="dbtn" style="left:288px;top:723px"><svg viewBox="0 0 9 9"><rect x="3.5" y="1.5" width="4" height="4" fill="none" stroke="#333" stroke-width="1"/><rect x="1.5" y="3.5" width="4" height="4" fill="#fff" stroke="#333" stroke-width="1"/></svg></div><div class="btn" style="left:314px;top:715px">几何点</div><div class="btn" style="left:508px;top:715px">线</div><div class="btn" style="left:701px;top:715px">面</div><div class="btn" style="left:895px;top:715px">实体</div><div class="btn dis" style="left:1089px;top:715px">快捷编辑</div><div class="btn" style="left:1283px;top:715px">布尔操作</div><div class="btn" style="left:314px;top:741px">距离</div><div class="btn" style="left:508px;top:741px">线编辑</div><div class="btn" style="left:701px;top:741px">面编辑</div><div class="btn" style="left:895px;top:741px">实体编辑</div><div class="btn" style="left:1089px;top:741px">几何点编辑</div><div class="btn" style="left:1283px;top:741px">几何操作</div><div class="btn dis" style="left:314px;top:767px">特征识别</div><div class="btn" style="left:508px;top:767px">线长度</div><div class="btn" style="left:701px;top:767px">面积</div><div class="btn dis" style="left:895px;top:767px">肋板</div><div class="btn" style="left:1089px;top:767px">自动几何清理</div><div class="btn dis" style="left:314px;top:793px">特征识别测试</div><div class="btn" style="left:701px;top:793px">抽中面</div><div class="btn" style="left:895px;top:793px">体积</div><div class="abs" style="left:263.5px;top:982px;width:60px;height:16px;line-height:16px;text-align:center;font-size:12px;white-space:nowrap;transform:rotate(-90deg)">功能面板</div><div class="abs" style="left:1897px;top:835px;width:1px;height:183px;background:#b8b8b8"></div><div class="abs" style="left:1896px;top:704px;width:24px;height:72px;border:1px solid #c0c0c0;border-left:1px solid #d8d8d8;border-radius:0 4px 4px 0;background:linear-gradient(90deg,#f2f2f2,#ffffff)"></div><div class="abs" style="left:1897px;top:777px;width:20px;height:58px;border:1px solid #c4c4c4;border-left:1px solid #b8b8b8;border-radius:0 4px 4px 0;background:#e1e1e1"></div><div class="abs" style="left:1878px;top:732px;width:60px;height:16px;line-height:16px;text-align:center;font-size:12px;white-space:nowrap;transform:rotate(90deg)">功能面板</div><div class="abs" style="left:1876.5px;top:797.5px;width:60px;height:16px;line-height:16px;text-align:center;font-size:12px;white-space:nowrap;transform:rotate(90deg)">命令行</div><div class="abs" style="left:0;top:1018px;width:1920px;height:18px;background:#f0f0f0"></div></body></html>
